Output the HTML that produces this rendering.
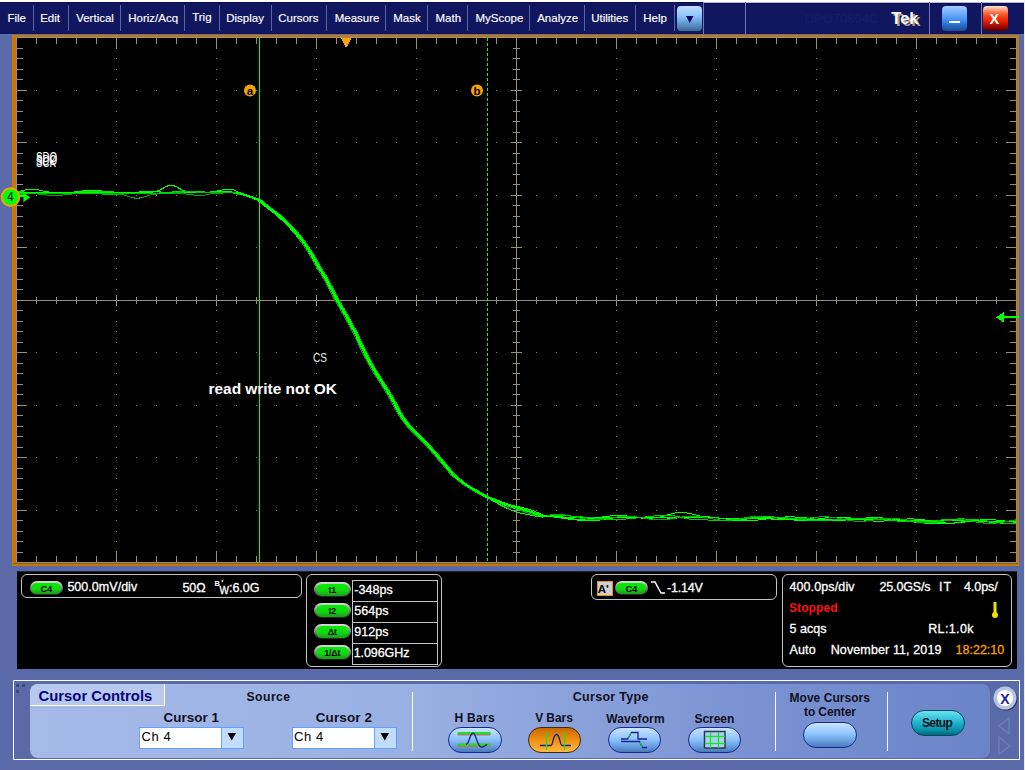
<!DOCTYPE html>
<html><head><meta charset="utf-8"><style>
*{margin:0;padding:0;box-sizing:border-box}
html,body{width:1025px;height:770px;overflow:hidden;background:#5a6aa8;font-family:"Liberation Sans", sans-serif;position:relative}
.a{position:absolute;white-space:pre}
.mi{position:absolute;top:10px;font-size:11.5px;color:#fff;line-height:14px}
.sep{position:absolute;top:5px;width:1px;height:26px;background:#6e78b0}
.w{color:#fff}
</style></head><body>
<div class="a" style="left:0;top:0;width:1025px;height:2px;background:#fff"></div>
<div class="a" style="left:0;top:2px;width:1025px;height:32px;background:#11175e"></div>
<div class="a" style="left:0;top:33px;width:1025px;height:1px;background:#0b0f55"></div>
<div class="a" style="left:0;top:2px;width:703px;height:1px;background:#0a0c58"></div>
<div class="a" style="left:704px;top:2px;width:321px;height:1px;background:#b8b8d8"></div>
<div class="a" style="left:704px;top:3px;width:321px;height:1px;background:#0a0c58"></div>
<div class="a" style="left:0;top:34px;width:1025px;height:1px;background:#6272b8"></div>
<svg class="a" style="left:0;top:0" width="1025" height="770" shape-rendering="crispEdges">
<rect x="12" y="35" width="1007" height="531" fill="#c87800"/>
<rect x="16" y="37" width="1001" height="526" fill="#000"/>
<rect x="16" y="37" width="1001" height="1" fill="#998f75"/>
<rect x="16" y="562" width="1001" height="1" fill="#998f75"/>
<rect x="13" y="563" width="1005" height="1" fill="#8e5c12"/>
<rect x="16" y="37" width="1" height="526" fill="#998f75"/>
<rect x="1016" y="37" width="1" height="526" fill="#998f75"/>
<rect x="116" y="48" width="1" height="1" fill="#8c846a"/>
<rect x="116" y="58" width="1" height="1" fill="#8c846a"/>
<rect x="116" y="69" width="1" height="1" fill="#8c846a"/>
<rect x="116" y="79" width="1" height="1" fill="#8c846a"/>
<rect x="116" y="90" width="1" height="1" fill="#8c846a"/>
<rect x="116" y="100" width="1" height="1" fill="#8c846a"/>
<rect x="116" y="111" width="1" height="1" fill="#8c846a"/>
<rect x="116" y="121" width="1" height="1" fill="#8c846a"/>
<rect x="116" y="132" width="1" height="1" fill="#8c846a"/>
<rect x="116" y="142" width="1" height="1" fill="#8c846a"/>
<rect x="116" y="153" width="1" height="1" fill="#8c846a"/>
<rect x="116" y="163" width="1" height="1" fill="#8c846a"/>
<rect x="116" y="174" width="1" height="1" fill="#8c846a"/>
<rect x="116" y="184" width="1" height="1" fill="#8c846a"/>
<rect x="116" y="195" width="1" height="1" fill="#8c846a"/>
<rect x="116" y="205" width="1" height="1" fill="#8c846a"/>
<rect x="116" y="216" width="1" height="1" fill="#8c846a"/>
<rect x="116" y="226" width="1" height="1" fill="#8c846a"/>
<rect x="116" y="237" width="1" height="1" fill="#8c846a"/>
<rect x="116" y="247" width="1" height="1" fill="#8c846a"/>
<rect x="116" y="258" width="1" height="1" fill="#8c846a"/>
<rect x="116" y="268" width="1" height="1" fill="#8c846a"/>
<rect x="116" y="279" width="1" height="1" fill="#8c846a"/>
<rect x="116" y="289" width="1" height="1" fill="#8c846a"/>
<rect x="116" y="300" width="1" height="1" fill="#8c846a"/>
<rect x="116" y="310" width="1" height="1" fill="#8c846a"/>
<rect x="116" y="321" width="1" height="1" fill="#8c846a"/>
<rect x="116" y="331" width="1" height="1" fill="#8c846a"/>
<rect x="116" y="342" width="1" height="1" fill="#8c846a"/>
<rect x="116" y="352" width="1" height="1" fill="#8c846a"/>
<rect x="116" y="363" width="1" height="1" fill="#8c846a"/>
<rect x="116" y="373" width="1" height="1" fill="#8c846a"/>
<rect x="116" y="384" width="1" height="1" fill="#8c846a"/>
<rect x="116" y="394" width="1" height="1" fill="#8c846a"/>
<rect x="116" y="405" width="1" height="1" fill="#8c846a"/>
<rect x="116" y="415" width="1" height="1" fill="#8c846a"/>
<rect x="116" y="426" width="1" height="1" fill="#8c846a"/>
<rect x="116" y="436" width="1" height="1" fill="#8c846a"/>
<rect x="116" y="447" width="1" height="1" fill="#8c846a"/>
<rect x="116" y="457" width="1" height="1" fill="#8c846a"/>
<rect x="116" y="468" width="1" height="1" fill="#8c846a"/>
<rect x="116" y="478" width="1" height="1" fill="#8c846a"/>
<rect x="116" y="489" width="1" height="1" fill="#8c846a"/>
<rect x="116" y="499" width="1" height="1" fill="#8c846a"/>
<rect x="116" y="510" width="1" height="1" fill="#8c846a"/>
<rect x="116" y="520" width="1" height="1" fill="#8c846a"/>
<rect x="116" y="531" width="1" height="1" fill="#8c846a"/>
<rect x="116" y="541" width="1" height="1" fill="#8c846a"/>
<rect x="116" y="552" width="1" height="1" fill="#8c846a"/>
<rect x="216" y="48" width="1" height="1" fill="#8c846a"/>
<rect x="216" y="58" width="1" height="1" fill="#8c846a"/>
<rect x="216" y="69" width="1" height="1" fill="#8c846a"/>
<rect x="216" y="79" width="1" height="1" fill="#8c846a"/>
<rect x="216" y="90" width="1" height="1" fill="#8c846a"/>
<rect x="216" y="100" width="1" height="1" fill="#8c846a"/>
<rect x="216" y="111" width="1" height="1" fill="#8c846a"/>
<rect x="216" y="121" width="1" height="1" fill="#8c846a"/>
<rect x="216" y="132" width="1" height="1" fill="#8c846a"/>
<rect x="216" y="142" width="1" height="1" fill="#8c846a"/>
<rect x="216" y="153" width="1" height="1" fill="#8c846a"/>
<rect x="216" y="163" width="1" height="1" fill="#8c846a"/>
<rect x="216" y="174" width="1" height="1" fill="#8c846a"/>
<rect x="216" y="184" width="1" height="1" fill="#8c846a"/>
<rect x="216" y="195" width="1" height="1" fill="#8c846a"/>
<rect x="216" y="205" width="1" height="1" fill="#8c846a"/>
<rect x="216" y="216" width="1" height="1" fill="#8c846a"/>
<rect x="216" y="226" width="1" height="1" fill="#8c846a"/>
<rect x="216" y="237" width="1" height="1" fill="#8c846a"/>
<rect x="216" y="247" width="1" height="1" fill="#8c846a"/>
<rect x="216" y="258" width="1" height="1" fill="#8c846a"/>
<rect x="216" y="268" width="1" height="1" fill="#8c846a"/>
<rect x="216" y="279" width="1" height="1" fill="#8c846a"/>
<rect x="216" y="289" width="1" height="1" fill="#8c846a"/>
<rect x="216" y="300" width="1" height="1" fill="#8c846a"/>
<rect x="216" y="310" width="1" height="1" fill="#8c846a"/>
<rect x="216" y="321" width="1" height="1" fill="#8c846a"/>
<rect x="216" y="331" width="1" height="1" fill="#8c846a"/>
<rect x="216" y="342" width="1" height="1" fill="#8c846a"/>
<rect x="216" y="352" width="1" height="1" fill="#8c846a"/>
<rect x="216" y="363" width="1" height="1" fill="#8c846a"/>
<rect x="216" y="373" width="1" height="1" fill="#8c846a"/>
<rect x="216" y="384" width="1" height="1" fill="#8c846a"/>
<rect x="216" y="394" width="1" height="1" fill="#8c846a"/>
<rect x="216" y="405" width="1" height="1" fill="#8c846a"/>
<rect x="216" y="415" width="1" height="1" fill="#8c846a"/>
<rect x="216" y="426" width="1" height="1" fill="#8c846a"/>
<rect x="216" y="436" width="1" height="1" fill="#8c846a"/>
<rect x="216" y="447" width="1" height="1" fill="#8c846a"/>
<rect x="216" y="457" width="1" height="1" fill="#8c846a"/>
<rect x="216" y="468" width="1" height="1" fill="#8c846a"/>
<rect x="216" y="478" width="1" height="1" fill="#8c846a"/>
<rect x="216" y="489" width="1" height="1" fill="#8c846a"/>
<rect x="216" y="499" width="1" height="1" fill="#8c846a"/>
<rect x="216" y="510" width="1" height="1" fill="#8c846a"/>
<rect x="216" y="520" width="1" height="1" fill="#8c846a"/>
<rect x="216" y="531" width="1" height="1" fill="#8c846a"/>
<rect x="216" y="541" width="1" height="1" fill="#8c846a"/>
<rect x="216" y="552" width="1" height="1" fill="#8c846a"/>
<rect x="316" y="48" width="1" height="1" fill="#8c846a"/>
<rect x="316" y="58" width="1" height="1" fill="#8c846a"/>
<rect x="316" y="69" width="1" height="1" fill="#8c846a"/>
<rect x="316" y="79" width="1" height="1" fill="#8c846a"/>
<rect x="316" y="90" width="1" height="1" fill="#8c846a"/>
<rect x="316" y="100" width="1" height="1" fill="#8c846a"/>
<rect x="316" y="111" width="1" height="1" fill="#8c846a"/>
<rect x="316" y="121" width="1" height="1" fill="#8c846a"/>
<rect x="316" y="132" width="1" height="1" fill="#8c846a"/>
<rect x="316" y="142" width="1" height="1" fill="#8c846a"/>
<rect x="316" y="153" width="1" height="1" fill="#8c846a"/>
<rect x="316" y="163" width="1" height="1" fill="#8c846a"/>
<rect x="316" y="174" width="1" height="1" fill="#8c846a"/>
<rect x="316" y="184" width="1" height="1" fill="#8c846a"/>
<rect x="316" y="195" width="1" height="1" fill="#8c846a"/>
<rect x="316" y="205" width="1" height="1" fill="#8c846a"/>
<rect x="316" y="216" width="1" height="1" fill="#8c846a"/>
<rect x="316" y="226" width="1" height="1" fill="#8c846a"/>
<rect x="316" y="237" width="1" height="1" fill="#8c846a"/>
<rect x="316" y="247" width="1" height="1" fill="#8c846a"/>
<rect x="316" y="258" width="1" height="1" fill="#8c846a"/>
<rect x="316" y="268" width="1" height="1" fill="#8c846a"/>
<rect x="316" y="279" width="1" height="1" fill="#8c846a"/>
<rect x="316" y="289" width="1" height="1" fill="#8c846a"/>
<rect x="316" y="300" width="1" height="1" fill="#8c846a"/>
<rect x="316" y="310" width="1" height="1" fill="#8c846a"/>
<rect x="316" y="321" width="1" height="1" fill="#8c846a"/>
<rect x="316" y="331" width="1" height="1" fill="#8c846a"/>
<rect x="316" y="342" width="1" height="1" fill="#8c846a"/>
<rect x="316" y="352" width="1" height="1" fill="#8c846a"/>
<rect x="316" y="363" width="1" height="1" fill="#8c846a"/>
<rect x="316" y="373" width="1" height="1" fill="#8c846a"/>
<rect x="316" y="384" width="1" height="1" fill="#8c846a"/>
<rect x="316" y="394" width="1" height="1" fill="#8c846a"/>
<rect x="316" y="405" width="1" height="1" fill="#8c846a"/>
<rect x="316" y="415" width="1" height="1" fill="#8c846a"/>
<rect x="316" y="426" width="1" height="1" fill="#8c846a"/>
<rect x="316" y="436" width="1" height="1" fill="#8c846a"/>
<rect x="316" y="447" width="1" height="1" fill="#8c846a"/>
<rect x="316" y="457" width="1" height="1" fill="#8c846a"/>
<rect x="316" y="468" width="1" height="1" fill="#8c846a"/>
<rect x="316" y="478" width="1" height="1" fill="#8c846a"/>
<rect x="316" y="489" width="1" height="1" fill="#8c846a"/>
<rect x="316" y="499" width="1" height="1" fill="#8c846a"/>
<rect x="316" y="510" width="1" height="1" fill="#8c846a"/>
<rect x="316" y="520" width="1" height="1" fill="#8c846a"/>
<rect x="316" y="531" width="1" height="1" fill="#8c846a"/>
<rect x="316" y="541" width="1" height="1" fill="#8c846a"/>
<rect x="316" y="552" width="1" height="1" fill="#8c846a"/>
<rect x="416" y="48" width="1" height="1" fill="#8c846a"/>
<rect x="416" y="58" width="1" height="1" fill="#8c846a"/>
<rect x="416" y="69" width="1" height="1" fill="#8c846a"/>
<rect x="416" y="79" width="1" height="1" fill="#8c846a"/>
<rect x="416" y="90" width="1" height="1" fill="#8c846a"/>
<rect x="416" y="100" width="1" height="1" fill="#8c846a"/>
<rect x="416" y="111" width="1" height="1" fill="#8c846a"/>
<rect x="416" y="121" width="1" height="1" fill="#8c846a"/>
<rect x="416" y="132" width="1" height="1" fill="#8c846a"/>
<rect x="416" y="142" width="1" height="1" fill="#8c846a"/>
<rect x="416" y="153" width="1" height="1" fill="#8c846a"/>
<rect x="416" y="163" width="1" height="1" fill="#8c846a"/>
<rect x="416" y="174" width="1" height="1" fill="#8c846a"/>
<rect x="416" y="184" width="1" height="1" fill="#8c846a"/>
<rect x="416" y="195" width="1" height="1" fill="#8c846a"/>
<rect x="416" y="205" width="1" height="1" fill="#8c846a"/>
<rect x="416" y="216" width="1" height="1" fill="#8c846a"/>
<rect x="416" y="226" width="1" height="1" fill="#8c846a"/>
<rect x="416" y="237" width="1" height="1" fill="#8c846a"/>
<rect x="416" y="247" width="1" height="1" fill="#8c846a"/>
<rect x="416" y="258" width="1" height="1" fill="#8c846a"/>
<rect x="416" y="268" width="1" height="1" fill="#8c846a"/>
<rect x="416" y="279" width="1" height="1" fill="#8c846a"/>
<rect x="416" y="289" width="1" height="1" fill="#8c846a"/>
<rect x="416" y="300" width="1" height="1" fill="#8c846a"/>
<rect x="416" y="310" width="1" height="1" fill="#8c846a"/>
<rect x="416" y="321" width="1" height="1" fill="#8c846a"/>
<rect x="416" y="331" width="1" height="1" fill="#8c846a"/>
<rect x="416" y="342" width="1" height="1" fill="#8c846a"/>
<rect x="416" y="352" width="1" height="1" fill="#8c846a"/>
<rect x="416" y="363" width="1" height="1" fill="#8c846a"/>
<rect x="416" y="373" width="1" height="1" fill="#8c846a"/>
<rect x="416" y="384" width="1" height="1" fill="#8c846a"/>
<rect x="416" y="394" width="1" height="1" fill="#8c846a"/>
<rect x="416" y="405" width="1" height="1" fill="#8c846a"/>
<rect x="416" y="415" width="1" height="1" fill="#8c846a"/>
<rect x="416" y="426" width="1" height="1" fill="#8c846a"/>
<rect x="416" y="436" width="1" height="1" fill="#8c846a"/>
<rect x="416" y="447" width="1" height="1" fill="#8c846a"/>
<rect x="416" y="457" width="1" height="1" fill="#8c846a"/>
<rect x="416" y="468" width="1" height="1" fill="#8c846a"/>
<rect x="416" y="478" width="1" height="1" fill="#8c846a"/>
<rect x="416" y="489" width="1" height="1" fill="#8c846a"/>
<rect x="416" y="499" width="1" height="1" fill="#8c846a"/>
<rect x="416" y="510" width="1" height="1" fill="#8c846a"/>
<rect x="416" y="520" width="1" height="1" fill="#8c846a"/>
<rect x="416" y="531" width="1" height="1" fill="#8c846a"/>
<rect x="416" y="541" width="1" height="1" fill="#8c846a"/>
<rect x="416" y="552" width="1" height="1" fill="#8c846a"/>
<rect x="616" y="48" width="1" height="1" fill="#8c846a"/>
<rect x="616" y="58" width="1" height="1" fill="#8c846a"/>
<rect x="616" y="69" width="1" height="1" fill="#8c846a"/>
<rect x="616" y="79" width="1" height="1" fill="#8c846a"/>
<rect x="616" y="90" width="1" height="1" fill="#8c846a"/>
<rect x="616" y="100" width="1" height="1" fill="#8c846a"/>
<rect x="616" y="111" width="1" height="1" fill="#8c846a"/>
<rect x="616" y="121" width="1" height="1" fill="#8c846a"/>
<rect x="616" y="132" width="1" height="1" fill="#8c846a"/>
<rect x="616" y="142" width="1" height="1" fill="#8c846a"/>
<rect x="616" y="153" width="1" height="1" fill="#8c846a"/>
<rect x="616" y="163" width="1" height="1" fill="#8c846a"/>
<rect x="616" y="174" width="1" height="1" fill="#8c846a"/>
<rect x="616" y="184" width="1" height="1" fill="#8c846a"/>
<rect x="616" y="195" width="1" height="1" fill="#8c846a"/>
<rect x="616" y="205" width="1" height="1" fill="#8c846a"/>
<rect x="616" y="216" width="1" height="1" fill="#8c846a"/>
<rect x="616" y="226" width="1" height="1" fill="#8c846a"/>
<rect x="616" y="237" width="1" height="1" fill="#8c846a"/>
<rect x="616" y="247" width="1" height="1" fill="#8c846a"/>
<rect x="616" y="258" width="1" height="1" fill="#8c846a"/>
<rect x="616" y="268" width="1" height="1" fill="#8c846a"/>
<rect x="616" y="279" width="1" height="1" fill="#8c846a"/>
<rect x="616" y="289" width="1" height="1" fill="#8c846a"/>
<rect x="616" y="300" width="1" height="1" fill="#8c846a"/>
<rect x="616" y="310" width="1" height="1" fill="#8c846a"/>
<rect x="616" y="321" width="1" height="1" fill="#8c846a"/>
<rect x="616" y="331" width="1" height="1" fill="#8c846a"/>
<rect x="616" y="342" width="1" height="1" fill="#8c846a"/>
<rect x="616" y="352" width="1" height="1" fill="#8c846a"/>
<rect x="616" y="363" width="1" height="1" fill="#8c846a"/>
<rect x="616" y="373" width="1" height="1" fill="#8c846a"/>
<rect x="616" y="384" width="1" height="1" fill="#8c846a"/>
<rect x="616" y="394" width="1" height="1" fill="#8c846a"/>
<rect x="616" y="405" width="1" height="1" fill="#8c846a"/>
<rect x="616" y="415" width="1" height="1" fill="#8c846a"/>
<rect x="616" y="426" width="1" height="1" fill="#8c846a"/>
<rect x="616" y="436" width="1" height="1" fill="#8c846a"/>
<rect x="616" y="447" width="1" height="1" fill="#8c846a"/>
<rect x="616" y="457" width="1" height="1" fill="#8c846a"/>
<rect x="616" y="468" width="1" height="1" fill="#8c846a"/>
<rect x="616" y="478" width="1" height="1" fill="#8c846a"/>
<rect x="616" y="489" width="1" height="1" fill="#8c846a"/>
<rect x="616" y="499" width="1" height="1" fill="#8c846a"/>
<rect x="616" y="510" width="1" height="1" fill="#8c846a"/>
<rect x="616" y="520" width="1" height="1" fill="#8c846a"/>
<rect x="616" y="531" width="1" height="1" fill="#8c846a"/>
<rect x="616" y="541" width="1" height="1" fill="#8c846a"/>
<rect x="616" y="552" width="1" height="1" fill="#8c846a"/>
<rect x="716" y="48" width="1" height="1" fill="#8c846a"/>
<rect x="716" y="58" width="1" height="1" fill="#8c846a"/>
<rect x="716" y="69" width="1" height="1" fill="#8c846a"/>
<rect x="716" y="79" width="1" height="1" fill="#8c846a"/>
<rect x="716" y="90" width="1" height="1" fill="#8c846a"/>
<rect x="716" y="100" width="1" height="1" fill="#8c846a"/>
<rect x="716" y="111" width="1" height="1" fill="#8c846a"/>
<rect x="716" y="121" width="1" height="1" fill="#8c846a"/>
<rect x="716" y="132" width="1" height="1" fill="#8c846a"/>
<rect x="716" y="142" width="1" height="1" fill="#8c846a"/>
<rect x="716" y="153" width="1" height="1" fill="#8c846a"/>
<rect x="716" y="163" width="1" height="1" fill="#8c846a"/>
<rect x="716" y="174" width="1" height="1" fill="#8c846a"/>
<rect x="716" y="184" width="1" height="1" fill="#8c846a"/>
<rect x="716" y="195" width="1" height="1" fill="#8c846a"/>
<rect x="716" y="205" width="1" height="1" fill="#8c846a"/>
<rect x="716" y="216" width="1" height="1" fill="#8c846a"/>
<rect x="716" y="226" width="1" height="1" fill="#8c846a"/>
<rect x="716" y="237" width="1" height="1" fill="#8c846a"/>
<rect x="716" y="247" width="1" height="1" fill="#8c846a"/>
<rect x="716" y="258" width="1" height="1" fill="#8c846a"/>
<rect x="716" y="268" width="1" height="1" fill="#8c846a"/>
<rect x="716" y="279" width="1" height="1" fill="#8c846a"/>
<rect x="716" y="289" width="1" height="1" fill="#8c846a"/>
<rect x="716" y="300" width="1" height="1" fill="#8c846a"/>
<rect x="716" y="310" width="1" height="1" fill="#8c846a"/>
<rect x="716" y="321" width="1" height="1" fill="#8c846a"/>
<rect x="716" y="331" width="1" height="1" fill="#8c846a"/>
<rect x="716" y="342" width="1" height="1" fill="#8c846a"/>
<rect x="716" y="352" width="1" height="1" fill="#8c846a"/>
<rect x="716" y="363" width="1" height="1" fill="#8c846a"/>
<rect x="716" y="373" width="1" height="1" fill="#8c846a"/>
<rect x="716" y="384" width="1" height="1" fill="#8c846a"/>
<rect x="716" y="394" width="1" height="1" fill="#8c846a"/>
<rect x="716" y="405" width="1" height="1" fill="#8c846a"/>
<rect x="716" y="415" width="1" height="1" fill="#8c846a"/>
<rect x="716" y="426" width="1" height="1" fill="#8c846a"/>
<rect x="716" y="436" width="1" height="1" fill="#8c846a"/>
<rect x="716" y="447" width="1" height="1" fill="#8c846a"/>
<rect x="716" y="457" width="1" height="1" fill="#8c846a"/>
<rect x="716" y="468" width="1" height="1" fill="#8c846a"/>
<rect x="716" y="478" width="1" height="1" fill="#8c846a"/>
<rect x="716" y="489" width="1" height="1" fill="#8c846a"/>
<rect x="716" y="499" width="1" height="1" fill="#8c846a"/>
<rect x="716" y="510" width="1" height="1" fill="#8c846a"/>
<rect x="716" y="520" width="1" height="1" fill="#8c846a"/>
<rect x="716" y="531" width="1" height="1" fill="#8c846a"/>
<rect x="716" y="541" width="1" height="1" fill="#8c846a"/>
<rect x="716" y="552" width="1" height="1" fill="#8c846a"/>
<rect x="816" y="48" width="1" height="1" fill="#8c846a"/>
<rect x="816" y="58" width="1" height="1" fill="#8c846a"/>
<rect x="816" y="69" width="1" height="1" fill="#8c846a"/>
<rect x="816" y="79" width="1" height="1" fill="#8c846a"/>
<rect x="816" y="90" width="1" height="1" fill="#8c846a"/>
<rect x="816" y="100" width="1" height="1" fill="#8c846a"/>
<rect x="816" y="111" width="1" height="1" fill="#8c846a"/>
<rect x="816" y="121" width="1" height="1" fill="#8c846a"/>
<rect x="816" y="132" width="1" height="1" fill="#8c846a"/>
<rect x="816" y="142" width="1" height="1" fill="#8c846a"/>
<rect x="816" y="153" width="1" height="1" fill="#8c846a"/>
<rect x="816" y="163" width="1" height="1" fill="#8c846a"/>
<rect x="816" y="174" width="1" height="1" fill="#8c846a"/>
<rect x="816" y="184" width="1" height="1" fill="#8c846a"/>
<rect x="816" y="195" width="1" height="1" fill="#8c846a"/>
<rect x="816" y="205" width="1" height="1" fill="#8c846a"/>
<rect x="816" y="216" width="1" height="1" fill="#8c846a"/>
<rect x="816" y="226" width="1" height="1" fill="#8c846a"/>
<rect x="816" y="237" width="1" height="1" fill="#8c846a"/>
<rect x="816" y="247" width="1" height="1" fill="#8c846a"/>
<rect x="816" y="258" width="1" height="1" fill="#8c846a"/>
<rect x="816" y="268" width="1" height="1" fill="#8c846a"/>
<rect x="816" y="279" width="1" height="1" fill="#8c846a"/>
<rect x="816" y="289" width="1" height="1" fill="#8c846a"/>
<rect x="816" y="300" width="1" height="1" fill="#8c846a"/>
<rect x="816" y="310" width="1" height="1" fill="#8c846a"/>
<rect x="816" y="321" width="1" height="1" fill="#8c846a"/>
<rect x="816" y="331" width="1" height="1" fill="#8c846a"/>
<rect x="816" y="342" width="1" height="1" fill="#8c846a"/>
<rect x="816" y="352" width="1" height="1" fill="#8c846a"/>
<rect x="816" y="363" width="1" height="1" fill="#8c846a"/>
<rect x="816" y="373" width="1" height="1" fill="#8c846a"/>
<rect x="816" y="384" width="1" height="1" fill="#8c846a"/>
<rect x="816" y="394" width="1" height="1" fill="#8c846a"/>
<rect x="816" y="405" width="1" height="1" fill="#8c846a"/>
<rect x="816" y="415" width="1" height="1" fill="#8c846a"/>
<rect x="816" y="426" width="1" height="1" fill="#8c846a"/>
<rect x="816" y="436" width="1" height="1" fill="#8c846a"/>
<rect x="816" y="447" width="1" height="1" fill="#8c846a"/>
<rect x="816" y="457" width="1" height="1" fill="#8c846a"/>
<rect x="816" y="468" width="1" height="1" fill="#8c846a"/>
<rect x="816" y="478" width="1" height="1" fill="#8c846a"/>
<rect x="816" y="489" width="1" height="1" fill="#8c846a"/>
<rect x="816" y="499" width="1" height="1" fill="#8c846a"/>
<rect x="816" y="510" width="1" height="1" fill="#8c846a"/>
<rect x="816" y="520" width="1" height="1" fill="#8c846a"/>
<rect x="816" y="531" width="1" height="1" fill="#8c846a"/>
<rect x="816" y="541" width="1" height="1" fill="#8c846a"/>
<rect x="816" y="552" width="1" height="1" fill="#8c846a"/>
<rect x="916" y="48" width="1" height="1" fill="#8c846a"/>
<rect x="916" y="58" width="1" height="1" fill="#8c846a"/>
<rect x="916" y="69" width="1" height="1" fill="#8c846a"/>
<rect x="916" y="79" width="1" height="1" fill="#8c846a"/>
<rect x="916" y="90" width="1" height="1" fill="#8c846a"/>
<rect x="916" y="100" width="1" height="1" fill="#8c846a"/>
<rect x="916" y="111" width="1" height="1" fill="#8c846a"/>
<rect x="916" y="121" width="1" height="1" fill="#8c846a"/>
<rect x="916" y="132" width="1" height="1" fill="#8c846a"/>
<rect x="916" y="142" width="1" height="1" fill="#8c846a"/>
<rect x="916" y="153" width="1" height="1" fill="#8c846a"/>
<rect x="916" y="163" width="1" height="1" fill="#8c846a"/>
<rect x="916" y="174" width="1" height="1" fill="#8c846a"/>
<rect x="916" y="184" width="1" height="1" fill="#8c846a"/>
<rect x="916" y="195" width="1" height="1" fill="#8c846a"/>
<rect x="916" y="205" width="1" height="1" fill="#8c846a"/>
<rect x="916" y="216" width="1" height="1" fill="#8c846a"/>
<rect x="916" y="226" width="1" height="1" fill="#8c846a"/>
<rect x="916" y="237" width="1" height="1" fill="#8c846a"/>
<rect x="916" y="247" width="1" height="1" fill="#8c846a"/>
<rect x="916" y="258" width="1" height="1" fill="#8c846a"/>
<rect x="916" y="268" width="1" height="1" fill="#8c846a"/>
<rect x="916" y="279" width="1" height="1" fill="#8c846a"/>
<rect x="916" y="289" width="1" height="1" fill="#8c846a"/>
<rect x="916" y="300" width="1" height="1" fill="#8c846a"/>
<rect x="916" y="310" width="1" height="1" fill="#8c846a"/>
<rect x="916" y="321" width="1" height="1" fill="#8c846a"/>
<rect x="916" y="331" width="1" height="1" fill="#8c846a"/>
<rect x="916" y="342" width="1" height="1" fill="#8c846a"/>
<rect x="916" y="352" width="1" height="1" fill="#8c846a"/>
<rect x="916" y="363" width="1" height="1" fill="#8c846a"/>
<rect x="916" y="373" width="1" height="1" fill="#8c846a"/>
<rect x="916" y="384" width="1" height="1" fill="#8c846a"/>
<rect x="916" y="394" width="1" height="1" fill="#8c846a"/>
<rect x="916" y="405" width="1" height="1" fill="#8c846a"/>
<rect x="916" y="415" width="1" height="1" fill="#8c846a"/>
<rect x="916" y="426" width="1" height="1" fill="#8c846a"/>
<rect x="916" y="436" width="1" height="1" fill="#8c846a"/>
<rect x="916" y="447" width="1" height="1" fill="#8c846a"/>
<rect x="916" y="457" width="1" height="1" fill="#8c846a"/>
<rect x="916" y="468" width="1" height="1" fill="#8c846a"/>
<rect x="916" y="478" width="1" height="1" fill="#8c846a"/>
<rect x="916" y="489" width="1" height="1" fill="#8c846a"/>
<rect x="916" y="499" width="1" height="1" fill="#8c846a"/>
<rect x="916" y="510" width="1" height="1" fill="#8c846a"/>
<rect x="916" y="520" width="1" height="1" fill="#8c846a"/>
<rect x="916" y="531" width="1" height="1" fill="#8c846a"/>
<rect x="916" y="541" width="1" height="1" fill="#8c846a"/>
<rect x="916" y="552" width="1" height="1" fill="#8c846a"/>
<rect x="36" y="90" width="1" height="1" fill="#8c846a"/>
<rect x="56" y="90" width="1" height="1" fill="#8c846a"/>
<rect x="76" y="90" width="1" height="1" fill="#8c846a"/>
<rect x="96" y="90" width="1" height="1" fill="#8c846a"/>
<rect x="116" y="90" width="1" height="1" fill="#8c846a"/>
<rect x="136" y="90" width="1" height="1" fill="#8c846a"/>
<rect x="156" y="90" width="1" height="1" fill="#8c846a"/>
<rect x="176" y="90" width="1" height="1" fill="#8c846a"/>
<rect x="196" y="90" width="1" height="1" fill="#8c846a"/>
<rect x="216" y="90" width="1" height="1" fill="#8c846a"/>
<rect x="236" y="90" width="1" height="1" fill="#8c846a"/>
<rect x="256" y="90" width="1" height="1" fill="#8c846a"/>
<rect x="276" y="90" width="1" height="1" fill="#8c846a"/>
<rect x="296" y="90" width="1" height="1" fill="#8c846a"/>
<rect x="316" y="90" width="1" height="1" fill="#8c846a"/>
<rect x="336" y="90" width="1" height="1" fill="#8c846a"/>
<rect x="356" y="90" width="1" height="1" fill="#8c846a"/>
<rect x="376" y="90" width="1" height="1" fill="#8c846a"/>
<rect x="396" y="90" width="1" height="1" fill="#8c846a"/>
<rect x="416" y="90" width="1" height="1" fill="#8c846a"/>
<rect x="436" y="90" width="1" height="1" fill="#8c846a"/>
<rect x="456" y="90" width="1" height="1" fill="#8c846a"/>
<rect x="476" y="90" width="1" height="1" fill="#8c846a"/>
<rect x="496" y="90" width="1" height="1" fill="#8c846a"/>
<rect x="516" y="90" width="1" height="1" fill="#8c846a"/>
<rect x="536" y="90" width="1" height="1" fill="#8c846a"/>
<rect x="556" y="90" width="1" height="1" fill="#8c846a"/>
<rect x="576" y="90" width="1" height="1" fill="#8c846a"/>
<rect x="596" y="90" width="1" height="1" fill="#8c846a"/>
<rect x="616" y="90" width="1" height="1" fill="#8c846a"/>
<rect x="636" y="90" width="1" height="1" fill="#8c846a"/>
<rect x="656" y="90" width="1" height="1" fill="#8c846a"/>
<rect x="676" y="90" width="1" height="1" fill="#8c846a"/>
<rect x="696" y="90" width="1" height="1" fill="#8c846a"/>
<rect x="716" y="90" width="1" height="1" fill="#8c846a"/>
<rect x="736" y="90" width="1" height="1" fill="#8c846a"/>
<rect x="756" y="90" width="1" height="1" fill="#8c846a"/>
<rect x="776" y="90" width="1" height="1" fill="#8c846a"/>
<rect x="796" y="90" width="1" height="1" fill="#8c846a"/>
<rect x="816" y="90" width="1" height="1" fill="#8c846a"/>
<rect x="836" y="90" width="1" height="1" fill="#8c846a"/>
<rect x="856" y="90" width="1" height="1" fill="#8c846a"/>
<rect x="876" y="90" width="1" height="1" fill="#8c846a"/>
<rect x="896" y="90" width="1" height="1" fill="#8c846a"/>
<rect x="916" y="90" width="1" height="1" fill="#8c846a"/>
<rect x="936" y="90" width="1" height="1" fill="#8c846a"/>
<rect x="956" y="90" width="1" height="1" fill="#8c846a"/>
<rect x="976" y="90" width="1" height="1" fill="#8c846a"/>
<rect x="996" y="90" width="1" height="1" fill="#8c846a"/>
<rect x="36" y="142" width="1" height="1" fill="#8c846a"/>
<rect x="56" y="142" width="1" height="1" fill="#8c846a"/>
<rect x="76" y="142" width="1" height="1" fill="#8c846a"/>
<rect x="96" y="142" width="1" height="1" fill="#8c846a"/>
<rect x="116" y="142" width="1" height="1" fill="#8c846a"/>
<rect x="136" y="142" width="1" height="1" fill="#8c846a"/>
<rect x="156" y="142" width="1" height="1" fill="#8c846a"/>
<rect x="176" y="142" width="1" height="1" fill="#8c846a"/>
<rect x="196" y="142" width="1" height="1" fill="#8c846a"/>
<rect x="216" y="142" width="1" height="1" fill="#8c846a"/>
<rect x="236" y="142" width="1" height="1" fill="#8c846a"/>
<rect x="256" y="142" width="1" height="1" fill="#8c846a"/>
<rect x="276" y="142" width="1" height="1" fill="#8c846a"/>
<rect x="296" y="142" width="1" height="1" fill="#8c846a"/>
<rect x="316" y="142" width="1" height="1" fill="#8c846a"/>
<rect x="336" y="142" width="1" height="1" fill="#8c846a"/>
<rect x="356" y="142" width="1" height="1" fill="#8c846a"/>
<rect x="376" y="142" width="1" height="1" fill="#8c846a"/>
<rect x="396" y="142" width="1" height="1" fill="#8c846a"/>
<rect x="416" y="142" width="1" height="1" fill="#8c846a"/>
<rect x="436" y="142" width="1" height="1" fill="#8c846a"/>
<rect x="456" y="142" width="1" height="1" fill="#8c846a"/>
<rect x="476" y="142" width="1" height="1" fill="#8c846a"/>
<rect x="496" y="142" width="1" height="1" fill="#8c846a"/>
<rect x="516" y="142" width="1" height="1" fill="#8c846a"/>
<rect x="536" y="142" width="1" height="1" fill="#8c846a"/>
<rect x="556" y="142" width="1" height="1" fill="#8c846a"/>
<rect x="576" y="142" width="1" height="1" fill="#8c846a"/>
<rect x="596" y="142" width="1" height="1" fill="#8c846a"/>
<rect x="616" y="142" width="1" height="1" fill="#8c846a"/>
<rect x="636" y="142" width="1" height="1" fill="#8c846a"/>
<rect x="656" y="142" width="1" height="1" fill="#8c846a"/>
<rect x="676" y="142" width="1" height="1" fill="#8c846a"/>
<rect x="696" y="142" width="1" height="1" fill="#8c846a"/>
<rect x="716" y="142" width="1" height="1" fill="#8c846a"/>
<rect x="736" y="142" width="1" height="1" fill="#8c846a"/>
<rect x="756" y="142" width="1" height="1" fill="#8c846a"/>
<rect x="776" y="142" width="1" height="1" fill="#8c846a"/>
<rect x="796" y="142" width="1" height="1" fill="#8c846a"/>
<rect x="816" y="142" width="1" height="1" fill="#8c846a"/>
<rect x="836" y="142" width="1" height="1" fill="#8c846a"/>
<rect x="856" y="142" width="1" height="1" fill="#8c846a"/>
<rect x="876" y="142" width="1" height="1" fill="#8c846a"/>
<rect x="896" y="142" width="1" height="1" fill="#8c846a"/>
<rect x="916" y="142" width="1" height="1" fill="#8c846a"/>
<rect x="936" y="142" width="1" height="1" fill="#8c846a"/>
<rect x="956" y="142" width="1" height="1" fill="#8c846a"/>
<rect x="976" y="142" width="1" height="1" fill="#8c846a"/>
<rect x="996" y="142" width="1" height="1" fill="#8c846a"/>
<rect x="36" y="195" width="1" height="1" fill="#8c846a"/>
<rect x="56" y="195" width="1" height="1" fill="#8c846a"/>
<rect x="76" y="195" width="1" height="1" fill="#8c846a"/>
<rect x="96" y="195" width="1" height="1" fill="#8c846a"/>
<rect x="116" y="195" width="1" height="1" fill="#8c846a"/>
<rect x="136" y="195" width="1" height="1" fill="#8c846a"/>
<rect x="156" y="195" width="1" height="1" fill="#8c846a"/>
<rect x="176" y="195" width="1" height="1" fill="#8c846a"/>
<rect x="196" y="195" width="1" height="1" fill="#8c846a"/>
<rect x="216" y="195" width="1" height="1" fill="#8c846a"/>
<rect x="236" y="195" width="1" height="1" fill="#8c846a"/>
<rect x="256" y="195" width="1" height="1" fill="#8c846a"/>
<rect x="276" y="195" width="1" height="1" fill="#8c846a"/>
<rect x="296" y="195" width="1" height="1" fill="#8c846a"/>
<rect x="316" y="195" width="1" height="1" fill="#8c846a"/>
<rect x="336" y="195" width="1" height="1" fill="#8c846a"/>
<rect x="356" y="195" width="1" height="1" fill="#8c846a"/>
<rect x="376" y="195" width="1" height="1" fill="#8c846a"/>
<rect x="396" y="195" width="1" height="1" fill="#8c846a"/>
<rect x="416" y="195" width="1" height="1" fill="#8c846a"/>
<rect x="436" y="195" width="1" height="1" fill="#8c846a"/>
<rect x="456" y="195" width="1" height="1" fill="#8c846a"/>
<rect x="476" y="195" width="1" height="1" fill="#8c846a"/>
<rect x="496" y="195" width="1" height="1" fill="#8c846a"/>
<rect x="516" y="195" width="1" height="1" fill="#8c846a"/>
<rect x="536" y="195" width="1" height="1" fill="#8c846a"/>
<rect x="556" y="195" width="1" height="1" fill="#8c846a"/>
<rect x="576" y="195" width="1" height="1" fill="#8c846a"/>
<rect x="596" y="195" width="1" height="1" fill="#8c846a"/>
<rect x="616" y="195" width="1" height="1" fill="#8c846a"/>
<rect x="636" y="195" width="1" height="1" fill="#8c846a"/>
<rect x="656" y="195" width="1" height="1" fill="#8c846a"/>
<rect x="676" y="195" width="1" height="1" fill="#8c846a"/>
<rect x="696" y="195" width="1" height="1" fill="#8c846a"/>
<rect x="716" y="195" width="1" height="1" fill="#8c846a"/>
<rect x="736" y="195" width="1" height="1" fill="#8c846a"/>
<rect x="756" y="195" width="1" height="1" fill="#8c846a"/>
<rect x="776" y="195" width="1" height="1" fill="#8c846a"/>
<rect x="796" y="195" width="1" height="1" fill="#8c846a"/>
<rect x="816" y="195" width="1" height="1" fill="#8c846a"/>
<rect x="836" y="195" width="1" height="1" fill="#8c846a"/>
<rect x="856" y="195" width="1" height="1" fill="#8c846a"/>
<rect x="876" y="195" width="1" height="1" fill="#8c846a"/>
<rect x="896" y="195" width="1" height="1" fill="#8c846a"/>
<rect x="916" y="195" width="1" height="1" fill="#8c846a"/>
<rect x="936" y="195" width="1" height="1" fill="#8c846a"/>
<rect x="956" y="195" width="1" height="1" fill="#8c846a"/>
<rect x="976" y="195" width="1" height="1" fill="#8c846a"/>
<rect x="996" y="195" width="1" height="1" fill="#8c846a"/>
<rect x="36" y="247" width="1" height="1" fill="#8c846a"/>
<rect x="56" y="247" width="1" height="1" fill="#8c846a"/>
<rect x="76" y="247" width="1" height="1" fill="#8c846a"/>
<rect x="96" y="247" width="1" height="1" fill="#8c846a"/>
<rect x="116" y="247" width="1" height="1" fill="#8c846a"/>
<rect x="136" y="247" width="1" height="1" fill="#8c846a"/>
<rect x="156" y="247" width="1" height="1" fill="#8c846a"/>
<rect x="176" y="247" width="1" height="1" fill="#8c846a"/>
<rect x="196" y="247" width="1" height="1" fill="#8c846a"/>
<rect x="216" y="247" width="1" height="1" fill="#8c846a"/>
<rect x="236" y="247" width="1" height="1" fill="#8c846a"/>
<rect x="256" y="247" width="1" height="1" fill="#8c846a"/>
<rect x="276" y="247" width="1" height="1" fill="#8c846a"/>
<rect x="296" y="247" width="1" height="1" fill="#8c846a"/>
<rect x="316" y="247" width="1" height="1" fill="#8c846a"/>
<rect x="336" y="247" width="1" height="1" fill="#8c846a"/>
<rect x="356" y="247" width="1" height="1" fill="#8c846a"/>
<rect x="376" y="247" width="1" height="1" fill="#8c846a"/>
<rect x="396" y="247" width="1" height="1" fill="#8c846a"/>
<rect x="416" y="247" width="1" height="1" fill="#8c846a"/>
<rect x="436" y="247" width="1" height="1" fill="#8c846a"/>
<rect x="456" y="247" width="1" height="1" fill="#8c846a"/>
<rect x="476" y="247" width="1" height="1" fill="#8c846a"/>
<rect x="496" y="247" width="1" height="1" fill="#8c846a"/>
<rect x="516" y="247" width="1" height="1" fill="#8c846a"/>
<rect x="536" y="247" width="1" height="1" fill="#8c846a"/>
<rect x="556" y="247" width="1" height="1" fill="#8c846a"/>
<rect x="576" y="247" width="1" height="1" fill="#8c846a"/>
<rect x="596" y="247" width="1" height="1" fill="#8c846a"/>
<rect x="616" y="247" width="1" height="1" fill="#8c846a"/>
<rect x="636" y="247" width="1" height="1" fill="#8c846a"/>
<rect x="656" y="247" width="1" height="1" fill="#8c846a"/>
<rect x="676" y="247" width="1" height="1" fill="#8c846a"/>
<rect x="696" y="247" width="1" height="1" fill="#8c846a"/>
<rect x="716" y="247" width="1" height="1" fill="#8c846a"/>
<rect x="736" y="247" width="1" height="1" fill="#8c846a"/>
<rect x="756" y="247" width="1" height="1" fill="#8c846a"/>
<rect x="776" y="247" width="1" height="1" fill="#8c846a"/>
<rect x="796" y="247" width="1" height="1" fill="#8c846a"/>
<rect x="816" y="247" width="1" height="1" fill="#8c846a"/>
<rect x="836" y="247" width="1" height="1" fill="#8c846a"/>
<rect x="856" y="247" width="1" height="1" fill="#8c846a"/>
<rect x="876" y="247" width="1" height="1" fill="#8c846a"/>
<rect x="896" y="247" width="1" height="1" fill="#8c846a"/>
<rect x="916" y="247" width="1" height="1" fill="#8c846a"/>
<rect x="936" y="247" width="1" height="1" fill="#8c846a"/>
<rect x="956" y="247" width="1" height="1" fill="#8c846a"/>
<rect x="976" y="247" width="1" height="1" fill="#8c846a"/>
<rect x="996" y="247" width="1" height="1" fill="#8c846a"/>
<rect x="36" y="352" width="1" height="1" fill="#8c846a"/>
<rect x="56" y="352" width="1" height="1" fill="#8c846a"/>
<rect x="76" y="352" width="1" height="1" fill="#8c846a"/>
<rect x="96" y="352" width="1" height="1" fill="#8c846a"/>
<rect x="116" y="352" width="1" height="1" fill="#8c846a"/>
<rect x="136" y="352" width="1" height="1" fill="#8c846a"/>
<rect x="156" y="352" width="1" height="1" fill="#8c846a"/>
<rect x="176" y="352" width="1" height="1" fill="#8c846a"/>
<rect x="196" y="352" width="1" height="1" fill="#8c846a"/>
<rect x="216" y="352" width="1" height="1" fill="#8c846a"/>
<rect x="236" y="352" width="1" height="1" fill="#8c846a"/>
<rect x="256" y="352" width="1" height="1" fill="#8c846a"/>
<rect x="276" y="352" width="1" height="1" fill="#8c846a"/>
<rect x="296" y="352" width="1" height="1" fill="#8c846a"/>
<rect x="316" y="352" width="1" height="1" fill="#8c846a"/>
<rect x="336" y="352" width="1" height="1" fill="#8c846a"/>
<rect x="356" y="352" width="1" height="1" fill="#8c846a"/>
<rect x="376" y="352" width="1" height="1" fill="#8c846a"/>
<rect x="396" y="352" width="1" height="1" fill="#8c846a"/>
<rect x="416" y="352" width="1" height="1" fill="#8c846a"/>
<rect x="436" y="352" width="1" height="1" fill="#8c846a"/>
<rect x="456" y="352" width="1" height="1" fill="#8c846a"/>
<rect x="476" y="352" width="1" height="1" fill="#8c846a"/>
<rect x="496" y="352" width="1" height="1" fill="#8c846a"/>
<rect x="516" y="352" width="1" height="1" fill="#8c846a"/>
<rect x="536" y="352" width="1" height="1" fill="#8c846a"/>
<rect x="556" y="352" width="1" height="1" fill="#8c846a"/>
<rect x="576" y="352" width="1" height="1" fill="#8c846a"/>
<rect x="596" y="352" width="1" height="1" fill="#8c846a"/>
<rect x="616" y="352" width="1" height="1" fill="#8c846a"/>
<rect x="636" y="352" width="1" height="1" fill="#8c846a"/>
<rect x="656" y="352" width="1" height="1" fill="#8c846a"/>
<rect x="676" y="352" width="1" height="1" fill="#8c846a"/>
<rect x="696" y="352" width="1" height="1" fill="#8c846a"/>
<rect x="716" y="352" width="1" height="1" fill="#8c846a"/>
<rect x="736" y="352" width="1" height="1" fill="#8c846a"/>
<rect x="756" y="352" width="1" height="1" fill="#8c846a"/>
<rect x="776" y="352" width="1" height="1" fill="#8c846a"/>
<rect x="796" y="352" width="1" height="1" fill="#8c846a"/>
<rect x="816" y="352" width="1" height="1" fill="#8c846a"/>
<rect x="836" y="352" width="1" height="1" fill="#8c846a"/>
<rect x="856" y="352" width="1" height="1" fill="#8c846a"/>
<rect x="876" y="352" width="1" height="1" fill="#8c846a"/>
<rect x="896" y="352" width="1" height="1" fill="#8c846a"/>
<rect x="916" y="352" width="1" height="1" fill="#8c846a"/>
<rect x="936" y="352" width="1" height="1" fill="#8c846a"/>
<rect x="956" y="352" width="1" height="1" fill="#8c846a"/>
<rect x="976" y="352" width="1" height="1" fill="#8c846a"/>
<rect x="996" y="352" width="1" height="1" fill="#8c846a"/>
<rect x="36" y="405" width="1" height="1" fill="#8c846a"/>
<rect x="56" y="405" width="1" height="1" fill="#8c846a"/>
<rect x="76" y="405" width="1" height="1" fill="#8c846a"/>
<rect x="96" y="405" width="1" height="1" fill="#8c846a"/>
<rect x="116" y="405" width="1" height="1" fill="#8c846a"/>
<rect x="136" y="405" width="1" height="1" fill="#8c846a"/>
<rect x="156" y="405" width="1" height="1" fill="#8c846a"/>
<rect x="176" y="405" width="1" height="1" fill="#8c846a"/>
<rect x="196" y="405" width="1" height="1" fill="#8c846a"/>
<rect x="216" y="405" width="1" height="1" fill="#8c846a"/>
<rect x="236" y="405" width="1" height="1" fill="#8c846a"/>
<rect x="256" y="405" width="1" height="1" fill="#8c846a"/>
<rect x="276" y="405" width="1" height="1" fill="#8c846a"/>
<rect x="296" y="405" width="1" height="1" fill="#8c846a"/>
<rect x="316" y="405" width="1" height="1" fill="#8c846a"/>
<rect x="336" y="405" width="1" height="1" fill="#8c846a"/>
<rect x="356" y="405" width="1" height="1" fill="#8c846a"/>
<rect x="376" y="405" width="1" height="1" fill="#8c846a"/>
<rect x="396" y="405" width="1" height="1" fill="#8c846a"/>
<rect x="416" y="405" width="1" height="1" fill="#8c846a"/>
<rect x="436" y="405" width="1" height="1" fill="#8c846a"/>
<rect x="456" y="405" width="1" height="1" fill="#8c846a"/>
<rect x="476" y="405" width="1" height="1" fill="#8c846a"/>
<rect x="496" y="405" width="1" height="1" fill="#8c846a"/>
<rect x="516" y="405" width="1" height="1" fill="#8c846a"/>
<rect x="536" y="405" width="1" height="1" fill="#8c846a"/>
<rect x="556" y="405" width="1" height="1" fill="#8c846a"/>
<rect x="576" y="405" width="1" height="1" fill="#8c846a"/>
<rect x="596" y="405" width="1" height="1" fill="#8c846a"/>
<rect x="616" y="405" width="1" height="1" fill="#8c846a"/>
<rect x="636" y="405" width="1" height="1" fill="#8c846a"/>
<rect x="656" y="405" width="1" height="1" fill="#8c846a"/>
<rect x="676" y="405" width="1" height="1" fill="#8c846a"/>
<rect x="696" y="405" width="1" height="1" fill="#8c846a"/>
<rect x="716" y="405" width="1" height="1" fill="#8c846a"/>
<rect x="736" y="405" width="1" height="1" fill="#8c846a"/>
<rect x="756" y="405" width="1" height="1" fill="#8c846a"/>
<rect x="776" y="405" width="1" height="1" fill="#8c846a"/>
<rect x="796" y="405" width="1" height="1" fill="#8c846a"/>
<rect x="816" y="405" width="1" height="1" fill="#8c846a"/>
<rect x="836" y="405" width="1" height="1" fill="#8c846a"/>
<rect x="856" y="405" width="1" height="1" fill="#8c846a"/>
<rect x="876" y="405" width="1" height="1" fill="#8c846a"/>
<rect x="896" y="405" width="1" height="1" fill="#8c846a"/>
<rect x="916" y="405" width="1" height="1" fill="#8c846a"/>
<rect x="936" y="405" width="1" height="1" fill="#8c846a"/>
<rect x="956" y="405" width="1" height="1" fill="#8c846a"/>
<rect x="976" y="405" width="1" height="1" fill="#8c846a"/>
<rect x="996" y="405" width="1" height="1" fill="#8c846a"/>
<rect x="36" y="457" width="1" height="1" fill="#8c846a"/>
<rect x="56" y="457" width="1" height="1" fill="#8c846a"/>
<rect x="76" y="457" width="1" height="1" fill="#8c846a"/>
<rect x="96" y="457" width="1" height="1" fill="#8c846a"/>
<rect x="116" y="457" width="1" height="1" fill="#8c846a"/>
<rect x="136" y="457" width="1" height="1" fill="#8c846a"/>
<rect x="156" y="457" width="1" height="1" fill="#8c846a"/>
<rect x="176" y="457" width="1" height="1" fill="#8c846a"/>
<rect x="196" y="457" width="1" height="1" fill="#8c846a"/>
<rect x="216" y="457" width="1" height="1" fill="#8c846a"/>
<rect x="236" y="457" width="1" height="1" fill="#8c846a"/>
<rect x="256" y="457" width="1" height="1" fill="#8c846a"/>
<rect x="276" y="457" width="1" height="1" fill="#8c846a"/>
<rect x="296" y="457" width="1" height="1" fill="#8c846a"/>
<rect x="316" y="457" width="1" height="1" fill="#8c846a"/>
<rect x="336" y="457" width="1" height="1" fill="#8c846a"/>
<rect x="356" y="457" width="1" height="1" fill="#8c846a"/>
<rect x="376" y="457" width="1" height="1" fill="#8c846a"/>
<rect x="396" y="457" width="1" height="1" fill="#8c846a"/>
<rect x="416" y="457" width="1" height="1" fill="#8c846a"/>
<rect x="436" y="457" width="1" height="1" fill="#8c846a"/>
<rect x="456" y="457" width="1" height="1" fill="#8c846a"/>
<rect x="476" y="457" width="1" height="1" fill="#8c846a"/>
<rect x="496" y="457" width="1" height="1" fill="#8c846a"/>
<rect x="516" y="457" width="1" height="1" fill="#8c846a"/>
<rect x="536" y="457" width="1" height="1" fill="#8c846a"/>
<rect x="556" y="457" width="1" height="1" fill="#8c846a"/>
<rect x="576" y="457" width="1" height="1" fill="#8c846a"/>
<rect x="596" y="457" width="1" height="1" fill="#8c846a"/>
<rect x="616" y="457" width="1" height="1" fill="#8c846a"/>
<rect x="636" y="457" width="1" height="1" fill="#8c846a"/>
<rect x="656" y="457" width="1" height="1" fill="#8c846a"/>
<rect x="676" y="457" width="1" height="1" fill="#8c846a"/>
<rect x="696" y="457" width="1" height="1" fill="#8c846a"/>
<rect x="716" y="457" width="1" height="1" fill="#8c846a"/>
<rect x="736" y="457" width="1" height="1" fill="#8c846a"/>
<rect x="756" y="457" width="1" height="1" fill="#8c846a"/>
<rect x="776" y="457" width="1" height="1" fill="#8c846a"/>
<rect x="796" y="457" width="1" height="1" fill="#8c846a"/>
<rect x="816" y="457" width="1" height="1" fill="#8c846a"/>
<rect x="836" y="457" width="1" height="1" fill="#8c846a"/>
<rect x="856" y="457" width="1" height="1" fill="#8c846a"/>
<rect x="876" y="457" width="1" height="1" fill="#8c846a"/>
<rect x="896" y="457" width="1" height="1" fill="#8c846a"/>
<rect x="916" y="457" width="1" height="1" fill="#8c846a"/>
<rect x="936" y="457" width="1" height="1" fill="#8c846a"/>
<rect x="956" y="457" width="1" height="1" fill="#8c846a"/>
<rect x="976" y="457" width="1" height="1" fill="#8c846a"/>
<rect x="996" y="457" width="1" height="1" fill="#8c846a"/>
<rect x="36" y="510" width="1" height="1" fill="#8c846a"/>
<rect x="56" y="510" width="1" height="1" fill="#8c846a"/>
<rect x="76" y="510" width="1" height="1" fill="#8c846a"/>
<rect x="96" y="510" width="1" height="1" fill="#8c846a"/>
<rect x="116" y="510" width="1" height="1" fill="#8c846a"/>
<rect x="136" y="510" width="1" height="1" fill="#8c846a"/>
<rect x="156" y="510" width="1" height="1" fill="#8c846a"/>
<rect x="176" y="510" width="1" height="1" fill="#8c846a"/>
<rect x="196" y="510" width="1" height="1" fill="#8c846a"/>
<rect x="216" y="510" width="1" height="1" fill="#8c846a"/>
<rect x="236" y="510" width="1" height="1" fill="#8c846a"/>
<rect x="256" y="510" width="1" height="1" fill="#8c846a"/>
<rect x="276" y="510" width="1" height="1" fill="#8c846a"/>
<rect x="296" y="510" width="1" height="1" fill="#8c846a"/>
<rect x="316" y="510" width="1" height="1" fill="#8c846a"/>
<rect x="336" y="510" width="1" height="1" fill="#8c846a"/>
<rect x="356" y="510" width="1" height="1" fill="#8c846a"/>
<rect x="376" y="510" width="1" height="1" fill="#8c846a"/>
<rect x="396" y="510" width="1" height="1" fill="#8c846a"/>
<rect x="416" y="510" width="1" height="1" fill="#8c846a"/>
<rect x="436" y="510" width="1" height="1" fill="#8c846a"/>
<rect x="456" y="510" width="1" height="1" fill="#8c846a"/>
<rect x="476" y="510" width="1" height="1" fill="#8c846a"/>
<rect x="496" y="510" width="1" height="1" fill="#8c846a"/>
<rect x="516" y="510" width="1" height="1" fill="#8c846a"/>
<rect x="536" y="510" width="1" height="1" fill="#8c846a"/>
<rect x="556" y="510" width="1" height="1" fill="#8c846a"/>
<rect x="576" y="510" width="1" height="1" fill="#8c846a"/>
<rect x="596" y="510" width="1" height="1" fill="#8c846a"/>
<rect x="616" y="510" width="1" height="1" fill="#8c846a"/>
<rect x="636" y="510" width="1" height="1" fill="#8c846a"/>
<rect x="656" y="510" width="1" height="1" fill="#8c846a"/>
<rect x="676" y="510" width="1" height="1" fill="#8c846a"/>
<rect x="696" y="510" width="1" height="1" fill="#8c846a"/>
<rect x="716" y="510" width="1" height="1" fill="#8c846a"/>
<rect x="736" y="510" width="1" height="1" fill="#8c846a"/>
<rect x="756" y="510" width="1" height="1" fill="#8c846a"/>
<rect x="776" y="510" width="1" height="1" fill="#8c846a"/>
<rect x="796" y="510" width="1" height="1" fill="#8c846a"/>
<rect x="816" y="510" width="1" height="1" fill="#8c846a"/>
<rect x="836" y="510" width="1" height="1" fill="#8c846a"/>
<rect x="856" y="510" width="1" height="1" fill="#8c846a"/>
<rect x="876" y="510" width="1" height="1" fill="#8c846a"/>
<rect x="896" y="510" width="1" height="1" fill="#8c846a"/>
<rect x="916" y="510" width="1" height="1" fill="#8c846a"/>
<rect x="936" y="510" width="1" height="1" fill="#8c846a"/>
<rect x="956" y="510" width="1" height="1" fill="#8c846a"/>
<rect x="976" y="510" width="1" height="1" fill="#8c846a"/>
<rect x="996" y="510" width="1" height="1" fill="#8c846a"/>
<rect x="36" y="38" width="1" height="6" fill="#998f75"/>
<rect x="36" y="556" width="1" height="6" fill="#998f75"/>
<rect x="56" y="38" width="1" height="6" fill="#998f75"/>
<rect x="56" y="556" width="1" height="6" fill="#998f75"/>
<rect x="76" y="38" width="1" height="6" fill="#998f75"/>
<rect x="76" y="556" width="1" height="6" fill="#998f75"/>
<rect x="96" y="38" width="1" height="6" fill="#998f75"/>
<rect x="96" y="556" width="1" height="6" fill="#998f75"/>
<rect x="116" y="38" width="1" height="11" fill="#998f75"/>
<rect x="116" y="551" width="1" height="11" fill="#998f75"/>
<rect x="136" y="38" width="1" height="6" fill="#998f75"/>
<rect x="136" y="556" width="1" height="6" fill="#998f75"/>
<rect x="156" y="38" width="1" height="6" fill="#998f75"/>
<rect x="156" y="556" width="1" height="6" fill="#998f75"/>
<rect x="176" y="38" width="1" height="6" fill="#998f75"/>
<rect x="176" y="556" width="1" height="6" fill="#998f75"/>
<rect x="196" y="38" width="1" height="6" fill="#998f75"/>
<rect x="196" y="556" width="1" height="6" fill="#998f75"/>
<rect x="216" y="38" width="1" height="11" fill="#998f75"/>
<rect x="216" y="551" width="1" height="11" fill="#998f75"/>
<rect x="236" y="38" width="1" height="6" fill="#998f75"/>
<rect x="236" y="556" width="1" height="6" fill="#998f75"/>
<rect x="256" y="38" width="1" height="6" fill="#998f75"/>
<rect x="256" y="556" width="1" height="6" fill="#998f75"/>
<rect x="276" y="38" width="1" height="6" fill="#998f75"/>
<rect x="276" y="556" width="1" height="6" fill="#998f75"/>
<rect x="296" y="38" width="1" height="6" fill="#998f75"/>
<rect x="296" y="556" width="1" height="6" fill="#998f75"/>
<rect x="316" y="38" width="1" height="11" fill="#998f75"/>
<rect x="316" y="551" width="1" height="11" fill="#998f75"/>
<rect x="336" y="38" width="1" height="6" fill="#998f75"/>
<rect x="336" y="556" width="1" height="6" fill="#998f75"/>
<rect x="356" y="38" width="1" height="6" fill="#998f75"/>
<rect x="356" y="556" width="1" height="6" fill="#998f75"/>
<rect x="376" y="38" width="1" height="6" fill="#998f75"/>
<rect x="376" y="556" width="1" height="6" fill="#998f75"/>
<rect x="396" y="38" width="1" height="6" fill="#998f75"/>
<rect x="396" y="556" width="1" height="6" fill="#998f75"/>
<rect x="416" y="38" width="1" height="11" fill="#998f75"/>
<rect x="416" y="551" width="1" height="11" fill="#998f75"/>
<rect x="436" y="38" width="1" height="6" fill="#998f75"/>
<rect x="436" y="556" width="1" height="6" fill="#998f75"/>
<rect x="456" y="38" width="1" height="6" fill="#998f75"/>
<rect x="456" y="556" width="1" height="6" fill="#998f75"/>
<rect x="476" y="38" width="1" height="6" fill="#998f75"/>
<rect x="476" y="556" width="1" height="6" fill="#998f75"/>
<rect x="496" y="38" width="1" height="6" fill="#998f75"/>
<rect x="496" y="556" width="1" height="6" fill="#998f75"/>
<rect x="516" y="38" width="1" height="11" fill="#998f75"/>
<rect x="516" y="551" width="1" height="11" fill="#998f75"/>
<rect x="536" y="38" width="1" height="6" fill="#998f75"/>
<rect x="536" y="556" width="1" height="6" fill="#998f75"/>
<rect x="556" y="38" width="1" height="6" fill="#998f75"/>
<rect x="556" y="556" width="1" height="6" fill="#998f75"/>
<rect x="576" y="38" width="1" height="6" fill="#998f75"/>
<rect x="576" y="556" width="1" height="6" fill="#998f75"/>
<rect x="596" y="38" width="1" height="6" fill="#998f75"/>
<rect x="596" y="556" width="1" height="6" fill="#998f75"/>
<rect x="616" y="38" width="1" height="11" fill="#998f75"/>
<rect x="616" y="551" width="1" height="11" fill="#998f75"/>
<rect x="636" y="38" width="1" height="6" fill="#998f75"/>
<rect x="636" y="556" width="1" height="6" fill="#998f75"/>
<rect x="656" y="38" width="1" height="6" fill="#998f75"/>
<rect x="656" y="556" width="1" height="6" fill="#998f75"/>
<rect x="676" y="38" width="1" height="6" fill="#998f75"/>
<rect x="676" y="556" width="1" height="6" fill="#998f75"/>
<rect x="696" y="38" width="1" height="6" fill="#998f75"/>
<rect x="696" y="556" width="1" height="6" fill="#998f75"/>
<rect x="716" y="38" width="1" height="11" fill="#998f75"/>
<rect x="716" y="551" width="1" height="11" fill="#998f75"/>
<rect x="736" y="38" width="1" height="6" fill="#998f75"/>
<rect x="736" y="556" width="1" height="6" fill="#998f75"/>
<rect x="756" y="38" width="1" height="6" fill="#998f75"/>
<rect x="756" y="556" width="1" height="6" fill="#998f75"/>
<rect x="776" y="38" width="1" height="6" fill="#998f75"/>
<rect x="776" y="556" width="1" height="6" fill="#998f75"/>
<rect x="796" y="38" width="1" height="6" fill="#998f75"/>
<rect x="796" y="556" width="1" height="6" fill="#998f75"/>
<rect x="816" y="38" width="1" height="11" fill="#998f75"/>
<rect x="816" y="551" width="1" height="11" fill="#998f75"/>
<rect x="836" y="38" width="1" height="6" fill="#998f75"/>
<rect x="836" y="556" width="1" height="6" fill="#998f75"/>
<rect x="856" y="38" width="1" height="6" fill="#998f75"/>
<rect x="856" y="556" width="1" height="6" fill="#998f75"/>
<rect x="876" y="38" width="1" height="6" fill="#998f75"/>
<rect x="876" y="556" width="1" height="6" fill="#998f75"/>
<rect x="896" y="38" width="1" height="6" fill="#998f75"/>
<rect x="896" y="556" width="1" height="6" fill="#998f75"/>
<rect x="916" y="38" width="1" height="11" fill="#998f75"/>
<rect x="916" y="551" width="1" height="11" fill="#998f75"/>
<rect x="936" y="38" width="1" height="6" fill="#998f75"/>
<rect x="936" y="556" width="1" height="6" fill="#998f75"/>
<rect x="956" y="38" width="1" height="6" fill="#998f75"/>
<rect x="956" y="556" width="1" height="6" fill="#998f75"/>
<rect x="976" y="38" width="1" height="6" fill="#998f75"/>
<rect x="976" y="556" width="1" height="6" fill="#998f75"/>
<rect x="996" y="38" width="1" height="6" fill="#998f75"/>
<rect x="996" y="556" width="1" height="6" fill="#998f75"/>
<rect x="17" y="48" width="6" height="1" fill="#998f75"/>
<rect x="1010" y="48" width="6" height="1" fill="#998f75"/>
<rect x="17" y="58" width="6" height="1" fill="#998f75"/>
<rect x="1010" y="58" width="6" height="1" fill="#998f75"/>
<rect x="17" y="69" width="6" height="1" fill="#998f75"/>
<rect x="1010" y="69" width="6" height="1" fill="#998f75"/>
<rect x="17" y="79" width="6" height="1" fill="#998f75"/>
<rect x="1010" y="79" width="6" height="1" fill="#998f75"/>
<rect x="17" y="90" width="10" height="1" fill="#998f75"/>
<rect x="1006" y="90" width="10" height="1" fill="#998f75"/>
<rect x="17" y="100" width="6" height="1" fill="#998f75"/>
<rect x="1010" y="100" width="6" height="1" fill="#998f75"/>
<rect x="17" y="111" width="6" height="1" fill="#998f75"/>
<rect x="1010" y="111" width="6" height="1" fill="#998f75"/>
<rect x="17" y="121" width="6" height="1" fill="#998f75"/>
<rect x="1010" y="121" width="6" height="1" fill="#998f75"/>
<rect x="17" y="132" width="6" height="1" fill="#998f75"/>
<rect x="1010" y="132" width="6" height="1" fill="#998f75"/>
<rect x="17" y="142" width="10" height="1" fill="#998f75"/>
<rect x="1006" y="142" width="10" height="1" fill="#998f75"/>
<rect x="17" y="153" width="6" height="1" fill="#998f75"/>
<rect x="1010" y="153" width="6" height="1" fill="#998f75"/>
<rect x="17" y="163" width="6" height="1" fill="#998f75"/>
<rect x="1010" y="163" width="6" height="1" fill="#998f75"/>
<rect x="17" y="174" width="6" height="1" fill="#998f75"/>
<rect x="1010" y="174" width="6" height="1" fill="#998f75"/>
<rect x="17" y="184" width="6" height="1" fill="#998f75"/>
<rect x="1010" y="184" width="6" height="1" fill="#998f75"/>
<rect x="17" y="195" width="10" height="1" fill="#998f75"/>
<rect x="1006" y="195" width="10" height="1" fill="#998f75"/>
<rect x="17" y="205" width="6" height="1" fill="#998f75"/>
<rect x="1010" y="205" width="6" height="1" fill="#998f75"/>
<rect x="17" y="216" width="6" height="1" fill="#998f75"/>
<rect x="1010" y="216" width="6" height="1" fill="#998f75"/>
<rect x="17" y="226" width="6" height="1" fill="#998f75"/>
<rect x="1010" y="226" width="6" height="1" fill="#998f75"/>
<rect x="17" y="237" width="6" height="1" fill="#998f75"/>
<rect x="1010" y="237" width="6" height="1" fill="#998f75"/>
<rect x="17" y="247" width="10" height="1" fill="#998f75"/>
<rect x="1006" y="247" width="10" height="1" fill="#998f75"/>
<rect x="17" y="258" width="6" height="1" fill="#998f75"/>
<rect x="1010" y="258" width="6" height="1" fill="#998f75"/>
<rect x="17" y="268" width="6" height="1" fill="#998f75"/>
<rect x="1010" y="268" width="6" height="1" fill="#998f75"/>
<rect x="17" y="279" width="6" height="1" fill="#998f75"/>
<rect x="1010" y="279" width="6" height="1" fill="#998f75"/>
<rect x="17" y="289" width="6" height="1" fill="#998f75"/>
<rect x="1010" y="289" width="6" height="1" fill="#998f75"/>
<rect x="17" y="300" width="10" height="1" fill="#998f75"/>
<rect x="1006" y="300" width="10" height="1" fill="#998f75"/>
<rect x="17" y="310" width="6" height="1" fill="#998f75"/>
<rect x="1010" y="310" width="6" height="1" fill="#998f75"/>
<rect x="17" y="321" width="6" height="1" fill="#998f75"/>
<rect x="1010" y="321" width="6" height="1" fill="#998f75"/>
<rect x="17" y="331" width="6" height="1" fill="#998f75"/>
<rect x="1010" y="331" width="6" height="1" fill="#998f75"/>
<rect x="17" y="342" width="6" height="1" fill="#998f75"/>
<rect x="1010" y="342" width="6" height="1" fill="#998f75"/>
<rect x="17" y="352" width="10" height="1" fill="#998f75"/>
<rect x="1006" y="352" width="10" height="1" fill="#998f75"/>
<rect x="17" y="363" width="6" height="1" fill="#998f75"/>
<rect x="1010" y="363" width="6" height="1" fill="#998f75"/>
<rect x="17" y="373" width="6" height="1" fill="#998f75"/>
<rect x="1010" y="373" width="6" height="1" fill="#998f75"/>
<rect x="17" y="384" width="6" height="1" fill="#998f75"/>
<rect x="1010" y="384" width="6" height="1" fill="#998f75"/>
<rect x="17" y="394" width="6" height="1" fill="#998f75"/>
<rect x="1010" y="394" width="6" height="1" fill="#998f75"/>
<rect x="17" y="405" width="10" height="1" fill="#998f75"/>
<rect x="1006" y="405" width="10" height="1" fill="#998f75"/>
<rect x="17" y="415" width="6" height="1" fill="#998f75"/>
<rect x="1010" y="415" width="6" height="1" fill="#998f75"/>
<rect x="17" y="426" width="6" height="1" fill="#998f75"/>
<rect x="1010" y="426" width="6" height="1" fill="#998f75"/>
<rect x="17" y="436" width="6" height="1" fill="#998f75"/>
<rect x="1010" y="436" width="6" height="1" fill="#998f75"/>
<rect x="17" y="447" width="6" height="1" fill="#998f75"/>
<rect x="1010" y="447" width="6" height="1" fill="#998f75"/>
<rect x="17" y="457" width="10" height="1" fill="#998f75"/>
<rect x="1006" y="457" width="10" height="1" fill="#998f75"/>
<rect x="17" y="468" width="6" height="1" fill="#998f75"/>
<rect x="1010" y="468" width="6" height="1" fill="#998f75"/>
<rect x="17" y="478" width="6" height="1" fill="#998f75"/>
<rect x="1010" y="478" width="6" height="1" fill="#998f75"/>
<rect x="17" y="489" width="6" height="1" fill="#998f75"/>
<rect x="1010" y="489" width="6" height="1" fill="#998f75"/>
<rect x="17" y="499" width="6" height="1" fill="#998f75"/>
<rect x="1010" y="499" width="6" height="1" fill="#998f75"/>
<rect x="17" y="510" width="10" height="1" fill="#998f75"/>
<rect x="1006" y="510" width="10" height="1" fill="#998f75"/>
<rect x="17" y="520" width="6" height="1" fill="#998f75"/>
<rect x="1010" y="520" width="6" height="1" fill="#998f75"/>
<rect x="17" y="531" width="6" height="1" fill="#998f75"/>
<rect x="1010" y="531" width="6" height="1" fill="#998f75"/>
<rect x="17" y="541" width="6" height="1" fill="#998f75"/>
<rect x="1010" y="541" width="6" height="1" fill="#998f75"/>
<rect x="17" y="552" width="6" height="1" fill="#998f75"/>
<rect x="1010" y="552" width="6" height="1" fill="#998f75"/>
<rect x="516" y="38" width="1" height="524" fill="#998f75"/>
<rect x="17" y="300" width="999" height="1" fill="#998f75"/>
<rect x="36" y="297" width="1" height="7" fill="#998f75"/>
<rect x="56" y="297" width="1" height="7" fill="#998f75"/>
<rect x="76" y="297" width="1" height="7" fill="#998f75"/>
<rect x="96" y="297" width="1" height="7" fill="#998f75"/>
<rect x="116" y="295" width="1" height="11" fill="#998f75"/>
<rect x="136" y="297" width="1" height="7" fill="#998f75"/>
<rect x="156" y="297" width="1" height="7" fill="#998f75"/>
<rect x="176" y="297" width="1" height="7" fill="#998f75"/>
<rect x="196" y="297" width="1" height="7" fill="#998f75"/>
<rect x="216" y="295" width="1" height="11" fill="#998f75"/>
<rect x="236" y="297" width="1" height="7" fill="#998f75"/>
<rect x="256" y="297" width="1" height="7" fill="#998f75"/>
<rect x="276" y="297" width="1" height="7" fill="#998f75"/>
<rect x="296" y="297" width="1" height="7" fill="#998f75"/>
<rect x="316" y="295" width="1" height="11" fill="#998f75"/>
<rect x="336" y="297" width="1" height="7" fill="#998f75"/>
<rect x="356" y="297" width="1" height="7" fill="#998f75"/>
<rect x="376" y="297" width="1" height="7" fill="#998f75"/>
<rect x="396" y="297" width="1" height="7" fill="#998f75"/>
<rect x="416" y="295" width="1" height="11" fill="#998f75"/>
<rect x="436" y="297" width="1" height="7" fill="#998f75"/>
<rect x="456" y="297" width="1" height="7" fill="#998f75"/>
<rect x="476" y="297" width="1" height="7" fill="#998f75"/>
<rect x="496" y="297" width="1" height="7" fill="#998f75"/>
<rect x="516" y="295" width="1" height="11" fill="#998f75"/>
<rect x="536" y="297" width="1" height="7" fill="#998f75"/>
<rect x="556" y="297" width="1" height="7" fill="#998f75"/>
<rect x="576" y="297" width="1" height="7" fill="#998f75"/>
<rect x="596" y="297" width="1" height="7" fill="#998f75"/>
<rect x="616" y="295" width="1" height="11" fill="#998f75"/>
<rect x="636" y="297" width="1" height="7" fill="#998f75"/>
<rect x="656" y="297" width="1" height="7" fill="#998f75"/>
<rect x="676" y="297" width="1" height="7" fill="#998f75"/>
<rect x="696" y="297" width="1" height="7" fill="#998f75"/>
<rect x="716" y="295" width="1" height="11" fill="#998f75"/>
<rect x="736" y="297" width="1" height="7" fill="#998f75"/>
<rect x="756" y="297" width="1" height="7" fill="#998f75"/>
<rect x="776" y="297" width="1" height="7" fill="#998f75"/>
<rect x="796" y="297" width="1" height="7" fill="#998f75"/>
<rect x="816" y="295" width="1" height="11" fill="#998f75"/>
<rect x="836" y="297" width="1" height="7" fill="#998f75"/>
<rect x="856" y="297" width="1" height="7" fill="#998f75"/>
<rect x="876" y="297" width="1" height="7" fill="#998f75"/>
<rect x="896" y="297" width="1" height="7" fill="#998f75"/>
<rect x="916" y="295" width="1" height="11" fill="#998f75"/>
<rect x="936" y="297" width="1" height="7" fill="#998f75"/>
<rect x="956" y="297" width="1" height="7" fill="#998f75"/>
<rect x="976" y="297" width="1" height="7" fill="#998f75"/>
<rect x="996" y="297" width="1" height="7" fill="#998f75"/>
<rect x="513" y="48" width="7" height="1" fill="#998f75"/>
<rect x="513" y="58" width="7" height="1" fill="#998f75"/>
<rect x="513" y="69" width="7" height="1" fill="#998f75"/>
<rect x="513" y="79" width="7" height="1" fill="#998f75"/>
<rect x="511" y="90" width="11" height="1" fill="#998f75"/>
<rect x="513" y="100" width="7" height="1" fill="#998f75"/>
<rect x="513" y="111" width="7" height="1" fill="#998f75"/>
<rect x="513" y="121" width="7" height="1" fill="#998f75"/>
<rect x="513" y="132" width="7" height="1" fill="#998f75"/>
<rect x="511" y="142" width="11" height="1" fill="#998f75"/>
<rect x="513" y="153" width="7" height="1" fill="#998f75"/>
<rect x="513" y="163" width="7" height="1" fill="#998f75"/>
<rect x="513" y="174" width="7" height="1" fill="#998f75"/>
<rect x="513" y="184" width="7" height="1" fill="#998f75"/>
<rect x="511" y="195" width="11" height="1" fill="#998f75"/>
<rect x="513" y="205" width="7" height="1" fill="#998f75"/>
<rect x="513" y="216" width="7" height="1" fill="#998f75"/>
<rect x="513" y="226" width="7" height="1" fill="#998f75"/>
<rect x="513" y="237" width="7" height="1" fill="#998f75"/>
<rect x="511" y="247" width="11" height="1" fill="#998f75"/>
<rect x="513" y="258" width="7" height="1" fill="#998f75"/>
<rect x="513" y="268" width="7" height="1" fill="#998f75"/>
<rect x="513" y="279" width="7" height="1" fill="#998f75"/>
<rect x="513" y="289" width="7" height="1" fill="#998f75"/>
<rect x="511" y="300" width="11" height="1" fill="#998f75"/>
<rect x="513" y="310" width="7" height="1" fill="#998f75"/>
<rect x="513" y="321" width="7" height="1" fill="#998f75"/>
<rect x="513" y="331" width="7" height="1" fill="#998f75"/>
<rect x="513" y="342" width="7" height="1" fill="#998f75"/>
<rect x="511" y="352" width="11" height="1" fill="#998f75"/>
<rect x="513" y="363" width="7" height="1" fill="#998f75"/>
<rect x="513" y="373" width="7" height="1" fill="#998f75"/>
<rect x="513" y="384" width="7" height="1" fill="#998f75"/>
<rect x="513" y="394" width="7" height="1" fill="#998f75"/>
<rect x="511" y="405" width="11" height="1" fill="#998f75"/>
<rect x="513" y="415" width="7" height="1" fill="#998f75"/>
<rect x="513" y="426" width="7" height="1" fill="#998f75"/>
<rect x="513" y="436" width="7" height="1" fill="#998f75"/>
<rect x="513" y="447" width="7" height="1" fill="#998f75"/>
<rect x="511" y="457" width="11" height="1" fill="#998f75"/>
<rect x="513" y="468" width="7" height="1" fill="#998f75"/>
<rect x="513" y="478" width="7" height="1" fill="#998f75"/>
<rect x="513" y="489" width="7" height="1" fill="#998f75"/>
<rect x="513" y="499" width="7" height="1" fill="#998f75"/>
<rect x="511" y="510" width="11" height="1" fill="#998f75"/>
<rect x="513" y="520" width="7" height="1" fill="#998f75"/>
<rect x="513" y="531" width="7" height="1" fill="#998f75"/>
<rect x="513" y="541" width="7" height="1" fill="#998f75"/>
<rect x="513" y="552" width="7" height="1" fill="#998f75"/>
<rect x="259" y="38" width="1" height="524" fill="#00ff00"/>
<line x1="487.5" y1="38" x2="487.5" y2="562" stroke="#00ff00" stroke-width="1" stroke-dasharray="3 2"/>
<polyline points="17,191.8 18,191.6 19,191.4 20,191.2 21,191.0 22,190.8 23,190.5 24,190.3 25,190.0 26,189.8 27,189.6 28,189.4 29,189.2 30,189.1 31,189.0 32,189.0 33,189.0 34,189.1 35,189.2 36,189.4 37,189.6 38,189.8 39,190.0 40,190.3 41,190.5 42,190.8 43,191.0 44,191.2 45,191.4 46,191.6 47,191.8 48,191.9 49,192.0 50,192.1 51,192.2 52,192.3 53,192.3 54,192.4 55,192.4 56,192.4 57,192.4 58,192.5 59,192.5 60,192.5 61,192.5 62,192.5 63,192.5 64,192.5 65,192.4 66,192.4 67,192.4 68,192.4 69,192.3 70,192.3 71,192.2 72,192.2 73,192.1 74,192.0 75,191.9 76,191.8 77,191.7 78,191.6 79,191.4 80,191.3 81,191.2 82,191.0 83,190.8 84,190.7 85,190.6 86,190.4 87,190.3 88,190.2 89,190.1 90,190.1 91,190.0 92,190.0 93,190.0 94,190.1 95,190.1 96,190.2 97,190.3 98,190.4 99,190.6 100,190.7 101,190.8 102,191.0 103,191.2 104,191.3 105,191.4 106,191.6 107,191.7 108,191.8 109,191.9 110,192.0 111,192.1 112,192.2 113,192.2 114,192.3 115,192.3 116,192.4 117,192.4 118,192.4 119,192.4 120,192.5 121,192.5 122,192.5 123,192.5 124,192.5 125,192.5 126,192.5 127,192.5 128,192.5 129,192.5 130,192.5 131,192.5 132,192.4 133,192.4 134,192.4 135,192.3 136,192.3 137,192.2 138,192.1 139,192.1 140,191.9 141,191.8 142,191.7 143,191.6 144,191.5 145,191.3 146,191.2 147,191.1 148,191.1 149,191.0 150,191.0 151,191.0 152,191.1 153,191.1 154,191.2 155,191.3 156,191.5 157,191.6 158,191.7 159,191.8 160,191.9 161,192.1 162,192.1 163,192.2 164,192.3 165,192.3 166,192.4 167,192.4 168,192.4 169,192.5 170,192.5 171,192.5 172,192.5 173,192.5 174,192.5 175,192.5 176,192.5 177,192.5 178,192.5 179,192.5 180,192.5 181,192.5 182,192.5 183,192.5 184,192.5 185,192.5 186,192.5 187,192.5 188,192.5 189,192.5 190,192.5 191,192.5 192,192.5 193,192.5 194,192.5 195,192.5 196,192.5 197,192.5 198,192.5 199,192.5 200,192.5 201,192.5 202,192.4 203,192.4 204,192.4 205,192.3 206,192.3 207,192.2 208,192.2 209,192.1 210,192.0 211,191.9 212,191.8 213,191.7 214,191.6 215,191.4 216,191.2 217,191.0 218,190.8 219,190.6 220,190.4 221,190.2 222,190.0 223,189.7 224,189.6 225,189.4 226,189.3 227,189.2 228,189.1 229,189.1 230,189.1 231,189.2 232,189.3 233,189.7 234,190.1 235,190.5 236,190.9 237,191.4 238,191.9 239,192.3 240,192.7 241,193.1 242,193.4 243,193.7 244,194.2 245,194.6 246,195.0 247,195.4 248,195.8 249,196.2 250,196.6 251,196.9 252,197.3 253,197.7 254,198.0 255,198.4 256,198.8 257,199.1 258,199.5 259,199.9 260,200.4 261,201.3 262,202.1 263,202.9 264,203.8 265,204.6 266,205.4 267,206.2 268,207.1 269,207.9 270,208.6 271,209.4 272,210.1 273,210.8 274,211.6 275,212.3 276,213.0 277,213.8 278,214.5 279,215.3 280,216.2 281,217.2 282,218.1 283,219.1 284,220.0 285,221.0 286,221.9 287,222.9 288,223.8 289,224.8 290,225.9 291,227.0 292,228.1 293,229.1 294,230.2 295,231.3 296,232.6 297,233.8 298,235.1 299,236.3 300,237.6" fill="none" stroke="#00ff00" stroke-width="1" shape-rendering="crispEdges"/>
<polyline points="299,236.3 300,237.6 301,238.9 302,240.1 303,241.5 304,243.0 305,244.5 306,246.0 307,247.4 308,248.9 309,250.4 310,251.9 311,253.6 312,255.3 313,257.1 314,258.8 315,260.6 316,262.4 317,264.1 318,265.9 319,267.5 320,269.1 321,270.8 322,272.4 323,274.0 324,275.6 325,277.2 326,279.0 327,280.9 328,282.8 329,284.7 330,286.6 331,288.6 332,290.5 333,292.4 334,294.3 335,296.2 336,298.2 337,300.1 338,301.8 339,303.5 340,305.2 341,306.9 342,308.6 343,310.4 344,312.1 345,313.8 346,315.5 347,317.4 348,319.2 349,321.1 350,323.0 351,324.8 352,326.7 353,328.6 354,330.4 355,332.3 356,334.4 357,336.5 358,338.7 359,340.8 360,342.9 361,345.0 362,347.1 363,349.3 364,351.4 365,353.3 366,355.2 367,357.1 368,358.9 369,360.8 370,362.7 371,364.6 372,366.4 373,368.3 374,369.9 375,371.5 376,373.1 377,374.6 378,376.2 379,377.7 380,379.3 381,380.9 382,382.4 383,384.0 384,385.5 385,387.2 386,388.8 387,390.5 388,392.2 389,393.8 390,395.5 391,397.2 392,398.8 393,400.7 394,402.5 395,404.4 396,406.2 397,408.0 398,409.9 399,411.7 400,413.6 401,415.4 402,416.9 403,418.2 404,419.5 405,420.9 406,422.2 407,423.5 408,424.9 409,426.2 410,427.2 411,428.2 412,429.2 413,430.2 414,431.3 415,432.3 416,433.3 417,434.3 418,435.3 419,436.3 420,437.3 421,438.3 422,439.3 423,440.3 424,441.3 425,442.3 426,443.3 427,444.3 428,445.3 429,446.4 430,447.5 431,448.7 432,449.8 433,451.0 434,452.1 435,453.3 436,454.4 437,455.6 438,456.7 439,457.9 440,459.0 441,460.2 442,461.4 443,462.6 444,463.8 445,465.0 446,466.2 447,467.4 448,468.6 449,469.8 450,471.0 451,472.2 452,473.4 453,474.6 454,475.6 455,476.4 456,477.2 457,478.0 458,478.8 459,479.6 460,480.4 461,481.2 462,482.0 463,482.8 464,483.6 465,484.4 466,485.0 467,485.6 468,486.2 469,486.8 470,487.4 471,488.0 472,488.6 473,489.2 474,489.8 475,490.4 476,491.0 477,491.6 478,492.2 479,492.7 480,493.3 481,493.9 482,494.5 483,495.0 484,495.6 485,496.2 486,496.8 487,497.3 488,497.7 489,498.0 490,498.4 491,498.7 492,499.1 493,499.4 494,499.8 495,500.1 496,500.5 497,500.8 498,501.2 499,501.5 500,501.9 501,502.2 502,502.6 503,502.9 504,503.3 505,503.6 506,504.0 507,504.3 508,504.7 509,505.0 510,505.4 511,505.7 512,506.1 513,506.4 514,506.8 515,507.1 516,507.5 517,507.8 518,508.1 519,508.4 520,508.7 521,509.0 522,509.4 523,509.7 524,510.0 525,510.3 526,510.6 527,510.9 528,511.2 529,511.5 530,511.9 531,512.2 532,512.6 533,512.9 534,513.3 535,513.7 536,514.0 537,514.4 538,514.7 539,515.1 540,515.4 541,515.8 542,516.1 543,516.3 544,516.3 545,516.4 546,516.4 547,516.4 548,516.5 549,516.5 550,516.6 551,516.6 552,516.6 553,516.7 554,516.7 555,516.7 556,516.8 557,516.8 558,516.8 559,516.9 560,516.9 561,516.9 562,516.9 563,517.0 564,517.0 565,517.0 566,517.1 567,517.1 568,517.1 569,517.2 570,517.2 571,517.2 572,517.2 573,517.3 574,517.3 575,517.3 576,517.4 577,517.4 578,517.4 579,517.5 580,517.5 581,517.5 582,517.6 583,517.6 584,517.6 585,517.6 586,517.5 587,517.5 588,517.5 589,517.5 590,517.5 591,517.5 592,517.5 593,517.5 594,517.5 595,517.5 596,517.5 597,517.5 598,517.5 599,517.5 600,517.5 601,517.5 602,517.5 603,517.5 604,517.5 605,517.5 606,517.5 607,517.5 608,517.5 609,517.6 610,517.6 611,517.6 612,517.6 613,517.6 614,517.6 615,517.6 616,517.6 617,517.6 618,517.6 619,517.6 620,517.6 621,517.6 622,517.6 623,517.7 624,517.7 625,517.7 626,517.7 627,517.7 628,517.7 629,517.7 630,517.7 631,517.7 632,517.7 633,517.7 634,517.7 635,517.7 636,517.7 637,517.7 638,517.7 639,517.7 640,517.8 641,517.8 642,517.8 643,517.8 644,517.8 645,517.8 646,517.8 647,517.8 648,517.8 649,517.8 650,517.8 651,517.8 652,517.8 653,517.8 654,517.8 655,517.8 656,517.8 657,517.7 658,517.7 659,517.7 660,517.7 661,517.7 662,517.7 663,517.7 664,517.7 665,517.7 666,517.7 667,517.7 668,517.6 669,517.6 670,517.6 671,517.6 672,517.6 673,517.6 674,517.6 675,517.5 676,517.5 677,517.5 678,517.5 679,517.5 680,517.5 681,517.5 682,517.5 683,517.5 684,517.5 685,517.6 686,517.6 687,517.6 688,517.6 689,517.6 690,517.6 691,517.6 692,517.6 693,517.6 694,517.6 695,517.6 696,517.7 697,517.7 698,517.7 699,517.7 700,517.7 701,517.7 702,517.7 703,517.7 704,517.7 705,517.8 706,517.8 707,517.8 708,517.8 709,517.8 710,517.8 711,517.8 712,517.9 713,517.9 714,517.9 715,517.9 716,517.9 717,517.9 718,518.0 719,518.0 720,518.0 721,518.0 722,518.0 723,518.0 724,518.0 725,518.0 726,518.1 727,518.1 728,518.1 729,518.1 730,518.1 731,518.1 732,518.1 733,518.1 734,518.2 735,518.2 736,518.2 737,518.2 738,518.2 739,518.3 740,518.3 741,518.3 742,518.3 743,518.3 744,518.4 745,518.4 746,518.4 747,518.4 748,518.4 749,518.5 750,518.5 751,518.5 752,518.5 753,518.6 754,518.6 755,518.6 756,518.6 757,518.7 758,518.7 759,518.7 760,518.7 761,518.7 762,518.8 763,518.8 764,518.8 765,518.8 766,518.9 767,518.9 768,518.9 769,518.9 770,518.9 771,519.0 772,519.0 773,519.0 774,519.0 775,519.0 776,519.0 777,519.0 778,519.1 779,519.1 780,519.1 781,519.1 782,519.1 783,519.1 784,519.1 785,519.1 786,519.2 787,519.2 788,519.2 789,519.2 790,519.2 791,519.2 792,519.2 793,519.2 794,519.2 795,519.2 796,519.2 797,519.2 798,519.2 799,519.2 800,519.2 801,519.2 802,519.2 803,519.2 804,519.2 805,519.2 806,519.2 807,519.2 808,519.2 809,519.2 810,519.2 811,519.2 812,519.2 813,519.1 814,519.1 815,519.1 816,519.1 817,519.1 818,519.1 819,519.1 820,519.1 821,519.1 822,519.1 823,519.1 824,519.1 825,519.1 826,519.1 827,519.1 828,519.1 829,519.1 830,519.1 831,519.1 832,519.0 833,519.0 834,519.0 835,519.0 836,519.0 837,519.0 838,519.0 839,519.0 840,519.1 841,519.1 842,519.1 843,519.1 844,519.1 845,519.1 846,519.1 847,519.1 848,519.1 849,519.1 850,519.1 851,519.1 852,519.1 853,519.1 854,519.2 855,519.2 856,519.2 857,519.2 858,519.2 859,519.2 860,519.3 861,519.3 862,519.3 863,519.3 864,519.3 865,519.3 866,519.4 867,519.4 868,519.4 869,519.4 870,519.5 871,519.5 872,519.5 873,519.5 874,519.6 875,519.6 876,519.6 877,519.6 878,519.6 879,519.7 880,519.7 881,519.7 882,519.7 883,519.8 884,519.8 885,519.8 886,519.8 887,519.9 888,519.9 889,519.9 890,519.9 891,520.0 892,520.0 893,520.0 894,520.0 895,520.0 896,520.1 897,520.1 898,520.1 899,520.1 900,520.1 901,520.2 902,520.2 903,520.2 904,520.2 905,520.2 906,520.2 907,520.2 908,520.3 909,520.3 910,520.3 911,520.3 912,520.3 913,520.3 914,520.3 915,520.4 916,520.4 917,520.4 918,520.4 919,520.5 920,520.5 921,520.5 922,520.5 923,520.5 924,520.6 925,520.6 926,520.6 927,520.6 928,520.6 929,520.6 930,520.6 931,520.7 932,520.7 933,520.7 934,520.7 935,520.7 936,520.7 937,520.7 938,520.8 939,520.8 940,520.8 941,520.8 942,520.8 943,520.8 944,520.8 945,520.8 946,520.8 947,520.9 948,520.9 949,520.9 950,520.9 951,520.9 952,520.9 953,520.9 954,520.9 955,520.9 956,520.9 957,520.9 958,520.9 959,520.8 960,520.8 961,520.8 962,520.8 963,520.8 964,520.8 965,520.8 966,520.8 967,520.8 968,520.8 969,520.9 970,520.9 971,520.9 972,520.9 973,520.9 974,520.9 975,520.9 976,520.9 977,520.9 978,520.9 979,520.9 980,520.9 981,521.0 982,521.0 983,521.0 984,521.0 985,521.0 986,521.0 987,521.0 988,521.1 989,521.1 990,521.1 991,521.1 992,521.1 993,521.2 994,521.2 995,521.2 996,521.2 997,521.2 998,521.3 999,521.3 1000,521.3 1001,521.3 1002,521.3 1003,521.4 1004,521.4 1005,521.4 1006,521.4 1007,521.5 1008,521.5 1009,521.5 1010,521.5 1011,521.5 1012,521.6 1013,521.6 1014,521.6 1015,521.6 1016,521.7" fill="none" stroke="#00ff00" stroke-width="1" shape-rendering="crispEdges"/>
<polyline points="17,193.7 18,193.7 19,193.7 20,193.7 21,193.7 22,193.7 23,193.7 24,193.7 25,193.7 26,193.7 27,193.7 28,193.7 29,193.7 30,193.7 31,193.7 32,193.8 33,193.8 34,193.8 35,193.8 36,193.9 37,193.9 38,194.0 39,194.0 40,194.1 41,194.2 42,194.3 43,194.4 44,194.6 45,194.7 46,194.8 47,195.0 48,195.1 49,195.3 50,195.4 51,195.5 52,195.6 53,195.6 54,195.7 55,195.7 56,195.7 57,195.6 58,195.6 59,195.5 60,195.4 61,195.3 62,195.1 63,195.0 64,194.8 65,194.7 66,194.6 67,194.4 68,194.3 69,194.2 70,194.1 71,194.0 72,194.0 73,193.9 74,193.9 75,193.8 76,193.8 77,193.8 78,193.8 79,193.7 80,193.7 81,193.7 82,193.7 83,193.7 84,193.7 85,193.7 86,193.7 87,193.7 88,193.7 89,193.7 90,193.7 91,193.7 92,193.7 93,193.7 94,193.7 95,193.7 96,193.7 97,193.7 98,193.7 99,193.7 100,193.7 101,193.7 102,193.7 103,193.7 104,193.7 105,193.7 106,193.7 107,193.7 108,193.7 109,193.7 110,193.7 111,193.7 112,193.8 113,193.8 114,193.8 115,193.9 116,193.9 117,194.0 118,194.1 119,194.2 120,194.3 121,194.5 122,194.6 123,194.9 124,195.1 125,195.4 126,195.6 127,195.9 128,196.3 129,196.6 130,196.9 131,197.2 132,197.5 133,197.7 134,197.9 135,198.1 136,198.2 137,198.2 138,198.2 139,198.1 140,197.9 141,197.7 142,197.5 143,197.2 144,196.9 145,196.6 146,196.3 147,195.9 148,195.6 149,195.4 150,195.1 151,194.9 152,194.6 153,194.5 154,194.3 155,194.2 156,194.1 157,194.0 158,193.9 159,193.9 160,193.8 161,193.8 162,193.8 163,193.7 164,193.7 165,193.7 166,193.7 167,193.7 168,193.7 169,193.7 170,193.7 171,193.7 172,193.7 173,193.7 174,193.7 175,193.7 176,193.7 177,193.7 178,193.7 179,193.7 180,193.7 181,193.8 182,193.8 183,193.8 184,193.9 185,193.9 186,194.0 187,194.1 188,194.2 189,194.3 190,194.4 191,194.6 192,194.8 193,194.9 194,195.1 195,195.3 196,195.4 197,195.5 198,195.6 199,195.7 200,195.7 201,195.6 202,195.5 203,195.4 204,195.3 205,195.1 206,194.9 207,194.7 208,194.5 209,194.3 210,194.1 211,193.9 212,193.8 213,193.6 214,193.5 215,193.4 216,193.3 217,193.3 218,193.2 219,193.1 220,193.1 221,193.0 222,193.0 223,193.0 224,192.9 225,192.9 226,192.9 227,192.8 228,192.8 229,192.8 230,192.7 231,192.7 232,192.9 233,193.1 234,193.4 235,193.6 236,193.8 237,194.0 238,194.1 239,194.3 240,194.5 241,194.7 242,194.8 243,195.1 244,195.4 245,195.7 246,196.0 247,196.3 248,196.6 249,197.0 250,197.3 251,197.6 252,197.9 253,198.2 254,198.5 255,198.8 256,199.1 257,199.5 258,199.8 259,200.3 260,201.2 261,202.0 262,202.8 263,203.7 264,204.5 265,205.3 266,206.2 267,207.0 268,207.8 269,208.6 270,209.3 271,210.0 272,210.8 273,211.5 274,212.2 275,213.0 276,213.7 277,214.4 278,215.2 279,216.1 280,217.1 281,218.0 282,219.0 283,219.9 284,220.9 285,221.8 286,222.8 287,223.7 288,224.7 289,225.8 290,226.9 291,228.0 292,229.0 293,230.1 294,231.2 295,232.4 296,233.7 297,235.0 298,236.2 299,237.5 300,238.7" fill="none" stroke="#00a800" stroke-width="1" shape-rendering="crispEdges"/>
<polyline points="299,237.5 300,238.7 301,240.0 302,241.3 303,242.8 304,244.3 305,245.8 306,247.3 307,248.8 308,250.3 309,251.8 310,253.4 311,255.2 312,256.9 313,258.7 314,260.4 315,262.2 316,263.9 317,265.7 318,267.4 319,269.0 320,270.6 321,272.2 322,273.8 323,275.4 324,277.0 325,278.8 326,280.7 327,282.6 328,284.5 329,286.5 330,288.4 331,290.3 332,292.2 333,294.1 334,296.1 335,298.0 336,299.9 337,301.6 338,303.3 339,305.0 340,306.8 341,308.5 342,310.2 343,311.9 344,313.6 345,315.3 346,317.2 347,319.0 348,320.9 349,322.8 350,324.6 351,326.5 352,328.4 353,330.2 354,332.1 355,334.2 356,336.3 357,338.4 358,340.6 359,342.7 360,344.8 361,346.9 362,349.0 363,351.2 364,353.1 365,355.0 366,356.9 367,358.7 368,360.6 369,362.5 370,364.4 371,366.3 372,368.1 373,369.8 374,371.3 375,372.9 376,374.5 377,376.0 378,377.6 379,379.1 380,380.7 381,382.3 382,383.8 383,385.4 384,387.0 385,388.7 386,390.3 387,392.0 388,393.7 389,395.3 390,397.0 391,398.7 392,400.5 393,402.3 394,404.2 395,406.0 396,407.9 397,409.7 398,411.6 399,413.4 400,415.2 401,416.7 402,418.1 403,419.4 404,420.7 405,422.1 406,423.4 407,424.7 408,426.1 409,427.1 410,428.1 411,429.1 412,430.1 413,431.2 414,432.2 415,433.2 416,434.2 417,435.2 418,436.2 419,437.2 420,438.2 421,439.2 422,440.2 423,441.2 424,442.2 425,443.2 426,444.2 427,445.2 428,446.3 429,447.4 430,448.6 431,449.7 432,450.9 433,452.0 434,453.2 435,454.3 436,455.5 437,456.6 438,457.8 439,458.9 440,460.1 441,461.2 442,462.4 443,463.7 444,464.9 445,466.1 446,467.3 447,468.5 448,469.7 449,470.9 450,472.1 451,473.3 452,474.5 453,475.5 454,476.3 455,477.1 456,477.9 457,478.7 458,479.5 459,480.3 460,481.1 461,481.9 462,482.7 463,483.5 464,484.3 465,485.0 466,485.6 467,486.2 468,486.8 469,487.4 470,488.0 471,488.5 472,489.1 473,489.7 474,490.2 475,490.8 476,491.4 477,492.0 478,492.5 479,493.1 480,493.7 481,494.3 482,494.9 483,495.5 484,496.1 485,496.7 486,497.3 487,497.7 488,498.1 489,498.5 490,498.9 491,499.3 492,499.7 493,500.2 494,500.6 495,501.0 496,501.4 497,501.9 498,502.3 499,502.7 500,503.1 501,503.6 502,504.0 503,504.4 504,504.8 505,505.2 506,505.6 507,505.9 508,506.3 509,506.7 510,507.0 511,507.4 512,507.7 513,508.1 514,508.4 515,508.7 516,509.0 517,509.2 518,509.5 519,509.7 520,509.9 521,510.1 522,510.3 523,510.5 524,510.7 525,510.9 526,511.1 527,511.2 528,511.4 529,511.6 530,511.8 531,512.1 532,512.3 533,512.6 534,512.8 535,513.1 536,513.3 537,513.6 538,513.9 539,514.2 540,514.5 541,514.8 542,515.0 543,515.0 544,515.1 545,515.1 546,515.2 547,515.2 548,515.3 549,515.4 550,515.5 551,515.6 552,515.7 553,515.9 554,516.0 555,516.1 556,516.3 557,516.4 558,516.6 559,516.8 560,516.9 561,517.1 562,517.3 563,517.4 564,517.6 565,517.8 566,517.9 567,518.1 568,518.2 569,518.4 570,518.5 571,518.6 572,518.7 573,518.9 574,519.0 575,519.1 576,519.1 577,519.2 578,519.3 579,519.3 580,519.4 581,519.4 582,519.4 583,519.3 584,519.3 585,519.2 586,519.1 587,519.0 588,518.9 589,518.8 590,518.7 591,518.6 592,518.5 593,518.3 594,518.2 595,518.1 596,517.9 597,517.8 598,517.6 599,517.5 600,517.3 601,517.2 602,517.0 603,516.9 604,516.7 605,516.6 606,516.5 607,516.3 608,516.2 609,516.1 610,516.0 611,515.9 612,515.9 613,515.8 614,515.7 615,515.7 616,515.7 617,515.6 618,515.6 619,515.6 620,515.6 621,515.6 622,515.7 623,515.7 624,515.8 625,515.8 626,515.9 627,516.0 628,516.1 629,516.2 630,516.3 631,516.4 632,516.5 633,516.6 634,516.8 635,516.9 636,517.0 637,517.1 638,517.3 639,517.4 640,517.5 641,517.6 642,517.7 643,517.8 644,517.9 645,518.0 646,518.0 647,518.1 648,518.1 649,518.1 650,518.1 651,518.1 652,518.1 653,518.0 654,517.9 655,517.8 656,517.7 657,517.6 658,517.4 659,517.2 660,517.0 661,516.8 662,516.5 663,516.3 664,516.0 665,515.7 666,515.4 667,515.1 668,514.8 669,514.5 670,514.2 671,514.0 672,513.7 673,513.4 674,513.2 675,513.0 676,512.8 677,512.7 678,512.6 679,512.5 680,512.5 681,512.5 682,512.5 683,512.5 684,512.6 685,512.7 686,512.9 687,513.0 688,513.2 689,513.4 690,513.6 691,513.8 692,514.1 693,514.3 694,514.6 695,514.8 696,515.1 697,515.3 698,515.6 699,515.8 700,516.1 701,516.3 702,516.6 703,516.8 704,517.1 705,517.3 706,517.5 707,517.8 708,518.0 709,518.2 710,518.4 711,518.6 712,518.8 713,519.0 714,519.2 715,519.3 716,519.5 717,519.7 718,519.8 719,520.0 720,520.1 721,520.2 722,520.3 723,520.3 724,520.4 725,520.5 726,520.5 727,520.5 728,520.6 729,520.6 730,520.6 731,520.6 732,520.5 733,520.5 734,520.4 735,520.4 736,520.3 737,520.2 738,520.1 739,520.0 740,519.9 741,519.8 742,519.7 743,519.6 744,519.4 745,519.3 746,519.2 747,519.0 748,518.9 749,518.8 750,518.6 751,518.5 752,518.4 753,518.3 754,518.1 755,518.0 756,517.9 757,517.8 758,517.7 759,517.7 760,517.6 761,517.5 762,517.5 763,517.4 764,517.4 765,517.4 766,517.4 767,517.4 768,517.4 769,517.5 770,517.5 771,517.5 772,517.6 773,517.7 774,517.7 775,517.8 776,517.9 777,518.0 778,518.1 779,518.3 780,518.4 781,518.5 782,518.6 783,518.7 784,518.9 785,519.0 786,519.1 787,519.2 788,519.4 789,519.5 790,519.6 791,519.7 792,519.8 793,519.9 794,520.0 795,520.0 796,520.1 797,520.2 798,520.2 799,520.2 800,520.3 801,520.3 802,520.3 803,520.3 804,520.2 805,520.2 806,520.2 807,520.1 808,520.0 809,520.0 810,519.9 811,519.8 812,519.7 813,519.6 814,519.5 815,519.4 816,519.2 817,519.1 818,519.0 819,518.8 820,518.7 821,518.6 822,518.4 823,518.3 824,518.2 825,518.0 826,517.9 827,517.8 828,517.7 829,517.6 830,517.5 831,517.4 832,517.3 833,517.3 834,517.2 835,517.2 836,517.2 837,517.1 838,517.1 839,517.1 840,517.1 841,517.2 842,517.2 843,517.3 844,517.3 845,517.4 846,517.5 847,517.6 848,517.7 849,517.8 850,517.9 851,518.1 852,518.2 853,518.3 854,518.5 855,518.6 856,518.8 857,518.9 858,519.1 859,519.3 860,519.4 861,519.6 862,519.7 863,519.9 864,520.0 865,520.2 866,520.3 867,520.4 868,520.5 869,520.6 870,520.7 871,520.8 872,520.9 873,521.0 874,521.0 875,521.1 876,521.1 877,521.1 878,521.1 879,521.1 880,521.1 881,521.1 882,521.1 883,521.0 884,521.0 885,520.9 886,520.9 887,520.8 888,520.7 889,520.6 890,520.5 891,520.4 892,520.3 893,520.2 894,520.1 895,520.0 896,519.9 897,519.8 898,519.7 899,519.6 900,519.5 901,519.4 902,519.3 903,519.2 904,519.1 905,519.1 906,519.0 907,519.0 908,518.9 909,518.9 910,518.9 911,518.9 912,518.9 913,518.9 914,519.0 915,519.0 916,519.1 917,519.2 918,519.2 919,519.3 920,519.4 921,519.6 922,519.7 923,519.8 924,519.9 925,520.1 926,520.2 927,520.4 928,520.6 929,520.7 930,520.9 931,521.0 932,521.2 933,521.4 934,521.5 935,521.7 936,521.8 937,522.0 938,522.1 939,522.3 940,522.4 941,522.5 942,522.6 943,522.7 944,522.8 945,522.9 946,523.0 947,523.1 948,523.1 949,523.1 950,523.1 951,523.1 952,523.1 953,523.1 954,523.0 955,523.0 956,522.9 957,522.9 958,522.8 959,522.7 960,522.6 961,522.5 962,522.3 963,522.2 964,522.1 965,521.9 966,521.8 967,521.7 968,521.5 969,521.4 970,521.2 971,521.1 972,521.0 973,520.8 974,520.7 975,520.6 976,520.4 977,520.3 978,520.2 979,520.1 980,520.0 981,519.9 982,519.9 983,519.8 984,519.7 985,519.7 986,519.7 987,519.7 988,519.7 989,519.7 990,519.7 991,519.7 992,519.8 993,519.8 994,519.9 995,519.9 996,520.0 997,520.1 998,520.2 999,520.3 1000,520.4 1001,520.5 1002,520.6 1003,520.8 1004,520.9 1005,521.0 1006,521.2 1007,521.3 1008,521.4 1009,521.5 1010,521.7 1011,521.8 1012,521.9 1013,522.0 1014,522.1 1015,522.2 1016,522.3" fill="none" stroke="#00ff00" stroke-width="1" shape-rendering="crispEdges"/>
<polyline points="17,191.5 18,191.6 19,191.6 20,191.7 21,191.8 22,191.8 23,191.9 24,192.0 25,192.0 26,192.1 27,192.2 28,192.3 29,192.4 30,192.5 31,192.5 32,192.6 33,192.7 34,192.8 35,192.9 36,192.9 37,193.0 38,193.1 39,193.2 40,193.2 41,193.3 42,193.4 43,193.4 44,193.5 45,193.5 46,193.6 47,193.6 48,193.6 49,193.7 50,193.7 51,193.7 52,193.7 53,193.7 54,193.7 55,193.7 56,193.7 57,193.7 58,193.6 59,193.6 60,193.6 61,193.5 62,193.5 63,193.4 64,193.4 65,193.3 66,193.2 67,193.2 68,193.1 69,193.0 70,192.9 71,192.9 72,192.8 73,192.7 74,192.6 75,192.5 76,192.5 77,192.4 78,192.3 79,192.2 80,192.1 81,192.0 82,192.0 83,191.9 84,191.8 85,191.8 86,191.7 87,191.6 88,191.6 89,191.5 90,191.5 91,191.4 92,191.4 93,191.4 94,191.3 95,191.3 96,191.3 97,191.3 98,191.3 99,191.3 100,191.3 101,191.3 102,191.3 103,191.4 104,191.4 105,191.4 106,191.5 107,191.5 108,191.6 109,191.6 110,191.7 111,191.8 112,191.8 113,191.9 114,192.0 115,192.1 116,192.1 117,192.2 118,192.3 119,192.4 120,192.5 121,192.6 122,192.6 123,192.7 124,192.8 125,192.9 126,193.0 127,193.0 128,193.1 129,193.2 130,193.3 131,193.3 132,193.4 133,193.4 134,193.5 135,193.5 136,193.6 137,193.6 138,193.6 139,193.7 140,193.7 141,193.7 142,193.7 143,193.7 144,193.7 145,193.7 146,193.7 147,193.6 148,193.6 149,193.6 150,193.6 151,193.5 152,193.5 153,193.4 154,193.3 155,193.3 156,193.2 157,193.2 158,193.1 159,193.0 160,192.9 161,192.9 162,192.8 163,192.7 164,192.6 165,192.5 166,192.4 167,192.4 168,192.3 169,192.2 170,192.1 171,192.0 172,192.0 173,191.9 174,191.8 175,191.7 176,191.7 177,191.6 178,191.6 179,191.5 180,191.5 181,191.4 182,191.4 183,191.4 184,191.3 185,191.3 186,191.3 187,191.3 188,191.3 189,191.3 190,191.3 191,191.3 192,191.4 193,191.4 194,191.4 195,191.5 196,191.5 197,191.5 198,191.6 199,191.7 200,191.7 201,191.8 202,191.8 203,191.9 204,191.9 205,192.0 206,192.0 207,192.0 208,192.1 209,192.2 210,192.2 211,192.3 212,192.3 213,192.4 214,192.4 215,192.5 216,192.5 217,192.6 218,192.6 219,192.6 220,192.7 221,192.7 222,192.7 223,192.8 224,192.8 225,192.8 226,192.8 227,192.8 228,192.8 229,192.8 230,192.8 231,192.8 232,192.7 233,192.7 234,192.9 235,193.2 236,193.4 237,193.5 238,193.7 239,193.8 240,193.9 241,194.1 242,194.2 243,194.4 244,194.5 245,194.8 246,195.1 247,195.4 248,195.7 249,196.0 250,196.4 251,196.7 252,197.0 253,197.4 254,197.7 255,198.1 256,198.4 257,198.8 258,199.2 259,199.5 260,199.9 261,200.5 262,201.3 263,202.2 264,203.0 265,203.8 266,204.7 267,205.5 268,206.3 269,207.2 270,208.0 271,208.7 272,209.4 273,210.2 274,210.9 275,211.6 276,212.4 277,213.1 278,213.8 279,214.6 280,215.4 281,216.3 282,217.3 283,218.2 284,219.2 285,220.1 286,221.1 287,222.0 288,223.0 289,223.9 290,225.0 291,226.0 292,227.1 293,228.2 294,229.3 295,230.3 296,231.4 297,232.7 298,233.9 299,235.2 300,236.5" fill="none" stroke="#00e000" stroke-width="1" shape-rendering="crispEdges"/>
<polyline points="299,235.2 300,236.5 301,237.7 302,239.0 303,240.2 304,241.6 305,243.1 306,244.6 307,246.1 308,247.6 309,249.1 310,250.6 311,252.1 312,253.8 313,255.5 314,257.3 315,259.0 316,260.8 317,262.5 318,264.3 319,266.0 320,267.7 321,269.3 322,270.9 323,272.5 324,274.1 325,275.7 326,277.4 327,279.2 328,281.1 329,283.0 330,284.9 331,286.8 332,288.8 333,290.7 334,292.6 335,294.5 336,296.4 337,298.4 338,300.2 339,302.0 340,303.7 341,305.4 342,307.1 343,308.8 344,310.5 345,312.2 346,314.0 347,315.7 348,317.6 349,319.4 350,321.3 351,323.2 352,325.0 353,326.9 354,328.8 355,330.6 356,332.5 357,334.6 358,336.8 359,338.9 360,341.0 361,343.1 362,345.2 363,347.3 364,349.5 365,351.6 366,353.5 367,355.4 368,357.2 369,359.1 370,361.0 371,362.9 372,364.8 373,366.6 374,368.5 375,370.1 376,371.7 377,373.2 378,374.8 379,376.3 380,377.9 381,379.5 382,381.0 383,382.6 384,384.1 385,385.7 386,387.3 387,389.0 388,390.7 389,392.3 390,394.0 391,395.7 392,397.3 393,399.0 394,400.8 395,402.7 396,404.5 397,406.4 398,408.2 399,410.1 400,411.9 401,413.8 402,415.6 403,417.0 404,418.3 405,419.7 406,421.0 407,422.3 408,423.7 409,425.0 410,426.3 411,427.3 412,428.3 413,429.3 414,430.3 415,431.4 416,432.4 417,433.4 418,434.4 419,435.4 420,436.4 421,437.4 422,438.4 423,439.4 424,440.4 425,441.4 426,442.4 427,443.4 428,444.4 429,445.4 430,446.5 431,447.7 432,448.8 433,450.0 434,451.1 435,452.3 436,453.4 437,454.6 438,455.7 439,456.9 440,458.0 441,459.2 442,460.3 443,461.5 444,462.7 445,463.9 446,465.1 447,466.3 448,467.5 449,468.7 450,469.9 451,471.1 452,472.3 453,473.5 454,474.7 455,475.7 456,476.5 457,477.3 458,478.1 459,478.9 460,479.7 461,480.5 462,481.3 463,482.1 464,482.9 465,483.7 466,484.5 467,485.1 468,485.7 469,486.3 470,486.9 471,487.5 472,488.1 473,488.8 474,489.4 475,490.1 476,490.7 477,491.3 478,492.0 479,492.6 480,493.2 481,493.9 482,494.5 483,495.1 484,495.7 485,496.3 486,497.0 487,497.6 488,498.2 489,498.5 490,498.9 491,499.3 492,499.6 493,500.0 494,500.3 495,500.7 496,501.0 497,501.3 498,501.6 499,501.9 500,502.2 501,502.5 502,502.8 503,503.1 504,503.4 505,503.6 506,503.9 507,504.1 508,504.4 509,504.6 510,504.9 511,505.1 512,505.4 513,505.6 514,505.8 515,506.0 516,506.3 517,506.5 518,506.7 519,506.9 520,507.1 521,507.3 522,507.5 523,507.8 524,508.0 525,508.2 526,508.5 527,508.8 528,509.0 529,509.3 530,509.6 531,510.0 532,510.4 533,510.8 534,511.1 535,511.5 536,512.0 537,512.4 538,512.8 539,513.2 540,513.7 541,514.1 542,514.6 543,515.0 544,515.3 545,515.4 546,515.6 547,515.7 548,515.9 549,516.1 550,516.2 551,516.4 552,516.6 553,516.7 554,516.9 555,517.1 556,517.2 557,517.4 558,517.5 559,517.7 560,517.9 561,518.0 562,518.1 563,518.3 564,518.4 565,518.6 566,518.7 567,518.8 568,519.0 569,519.1 570,519.2 571,519.3 572,519.4 573,519.5 574,519.6 575,519.8 576,519.9 577,520.0 578,520.1 579,520.2 580,520.2 581,520.3 582,520.4 583,520.5 584,520.5 585,520.6 586,520.6 587,520.6 588,520.6 589,520.6 590,520.6 591,520.6 592,520.6 593,520.5 594,520.5 595,520.4 596,520.4 597,520.3 598,520.2 599,520.1 600,520.0 601,519.9 602,519.7 603,519.6 604,519.4 605,519.3 606,519.1 607,519.0 608,518.8 609,518.7 610,518.5 611,518.3 612,518.2 613,518.0 614,517.9 615,517.7 616,517.6 617,517.5 618,517.4 619,517.3 620,517.2 621,517.1 622,517.0 623,517.0 624,517.0 625,516.9 626,516.9 627,516.9 628,516.9 629,517.0 630,517.0 631,517.1 632,517.1 633,517.2 634,517.3 635,517.4 636,517.5 637,517.6 638,517.7 639,517.8 640,517.9 641,518.0 642,518.1 643,518.2 644,518.3 645,518.4 646,518.5 647,518.6 648,518.7 649,518.8 650,518.9 651,519.0 652,519.0 653,519.1 654,519.1 655,519.2 656,519.2 657,519.2 658,519.3 659,519.3 660,519.3 661,519.3 662,519.2 663,519.2 664,519.2 665,519.1 666,519.1 667,519.0 668,518.9 669,518.9 670,518.8 671,518.7 672,518.6 673,518.5 674,518.4 675,518.3 676,518.2 677,518.0 678,517.9 679,517.8 680,517.7 681,517.6 682,517.5 683,517.4 684,517.3 685,517.2 686,517.1 687,517.1 688,517.0 689,516.9 690,516.8 691,516.8 692,516.7 693,516.6 694,516.6 695,516.6 696,516.5 697,516.5 698,516.5 699,516.5 700,516.5 701,516.5 702,516.5 703,516.5 704,516.6 705,516.6 706,516.7 707,516.8 708,516.8 709,516.9 710,517.0 711,517.1 712,517.2 713,517.3 714,517.4 715,517.5 716,517.7 717,517.8 718,517.9 719,518.1 720,518.2 721,518.4 722,518.5 723,518.6 724,518.8 725,518.9 726,519.0 727,519.2 728,519.3 729,519.4 730,519.6 731,519.7 732,519.8 733,519.9 734,520.0 735,520.1 736,520.2 737,520.3 738,520.4 739,520.4 740,520.5 741,520.5 742,520.6 743,520.6 744,520.6 745,520.6 746,520.6 747,520.6 748,520.6 749,520.6 750,520.6 751,520.5 752,520.5 753,520.4 754,520.3 755,520.3 756,520.2 757,520.1 758,520.0 759,519.9 760,519.8 761,519.7 762,519.5 763,519.4 764,519.3 765,519.2 766,519.0 767,518.9 768,518.8 769,518.6 770,518.5 771,518.4 772,518.2 773,518.1 774,518.0 775,517.9 776,517.7 777,517.6 778,517.5 779,517.4 780,517.3 781,517.2 782,517.2 783,517.1 784,517.0 785,517.0 786,516.9 787,516.9 788,516.9 789,516.9 790,516.9 791,516.9 792,516.9 793,516.9 794,516.9 795,517.0 796,517.0 797,517.1 798,517.2 799,517.2 800,517.3 801,517.4 802,517.5 803,517.6 804,517.7 805,517.8 806,517.9 807,518.1 808,518.2 809,518.3 810,518.4 811,518.6 812,518.7 813,518.8 814,519.0 815,519.1 816,519.2 817,519.3 818,519.5 819,519.6 820,519.7 821,519.8 822,519.9 823,520.0 824,520.1 825,520.2 826,520.3 827,520.3 828,520.4 829,520.4 830,520.5 831,520.5 832,520.5 833,520.6 834,520.6 835,520.6 836,520.6 837,520.5 838,520.5 839,520.5 840,520.4 841,520.4 842,520.3 843,520.2 844,520.2 845,520.1 846,520.0 847,519.9 848,519.8 849,519.7 850,519.6 851,519.5 852,519.4 853,519.3 854,519.2 855,519.1 856,519.0 857,518.8 858,518.7 859,518.6 860,518.5 861,518.4 862,518.3 863,518.2 864,518.1 865,518.1 866,518.0 867,517.9 868,517.9 869,517.8 870,517.8 871,517.7 872,517.7 873,517.7 874,517.7 875,517.7 876,517.7 877,517.7 878,517.7 879,517.7 880,517.8 881,517.8 882,517.9 883,518.0 884,518.1 885,518.2 886,518.3 887,518.4 888,518.5 889,518.6 890,518.7 891,518.8 892,519.0 893,519.1 894,519.3 895,519.4 896,519.6 897,519.7 898,519.9 899,520.0 900,520.2 901,520.3 902,520.5 903,520.6 904,520.8 905,520.9 906,521.1 907,521.2 908,521.3 909,521.5 910,521.6 911,521.7 912,521.8 913,521.9 914,522.0 915,522.2 916,522.3 917,522.4 918,522.5 919,522.6 920,522.7 921,522.7 922,522.8 923,522.9 924,523.0 925,523.1 926,523.1 927,523.2 928,523.3 929,523.3 930,523.4 931,523.5 932,523.5 933,523.6 934,523.6 935,523.7 936,523.7 937,523.8 938,523.8 939,523.8 940,523.9 941,523.9 942,523.9 943,523.9 944,523.9 945,523.8 946,523.8 947,523.8 948,523.7 949,523.6 950,523.5 951,523.5 952,523.3 953,523.2 954,523.1 955,522.9 956,522.8 957,522.6 958,522.5 959,522.3 960,522.2 961,522.0 962,521.9 963,521.7 964,521.6 965,521.5 966,521.4 967,521.3 968,521.2 969,521.1 970,521.0 971,521.0 972,520.9 973,520.9 974,520.9 975,520.9 976,520.9 977,520.9 978,521.0 979,521.0 980,521.1 981,521.2 982,521.3 983,521.3 984,521.4 985,521.5 986,521.6 987,521.7 988,521.8 989,522.0 990,522.1 991,522.2 992,522.3 993,522.4 994,522.5 995,522.6 996,522.7 997,522.8 998,522.8 999,522.9 1000,523.0 1001,523.0 1002,523.1 1003,523.1 1004,523.2 1005,523.2 1006,523.2 1007,523.2 1008,523.2 1009,523.2 1010,523.2 1011,523.1 1012,523.1 1013,523.1 1014,523.0 1015,522.9 1016,522.9" fill="none" stroke="#00ff00" stroke-width="1" shape-rendering="crispEdges"/>
<polyline points="17,192.5 18,192.5 19,192.5 20,192.5 21,192.5 22,192.5 23,192.5 24,192.5 25,192.5 26,192.5 27,192.5 28,192.5 29,192.5 30,192.5 31,192.5 32,192.5 33,192.5 34,192.5 35,192.5 36,192.5 37,192.5 38,192.5 39,192.5 40,192.5 41,192.5 42,192.5 43,192.5 44,192.5 45,192.5 46,192.5 47,192.5 48,192.5 49,192.5 50,192.5 51,192.5 52,192.5 53,192.5 54,192.5 55,192.5 56,192.5 57,192.5 58,192.5 59,192.5 60,192.5 61,192.5 62,192.5 63,192.5 64,192.5 65,192.5 66,192.5 67,192.5 68,192.5 69,192.5 70,192.5 71,192.5 72,192.5 73,192.5 74,192.5 75,192.5 76,192.5 77,192.5 78,192.5 79,192.5 80,192.5 81,192.5 82,192.5 83,192.5 84,192.5 85,192.5 86,192.5 87,192.5 88,192.5 89,192.5 90,192.5 91,192.5 92,192.5 93,192.5 94,192.5 95,192.5 96,192.5 97,192.5 98,192.5 99,192.5 100,192.5 101,192.5 102,192.5 103,192.5 104,192.5 105,192.5 106,192.5 107,192.5 108,192.5 109,192.5 110,192.5 111,192.5 112,192.5 113,192.5 114,192.5 115,192.5 116,192.5 117,192.5 118,192.5 119,192.5 120,192.5 121,192.5 122,192.5 123,192.5 124,192.5 125,192.5 126,192.5 127,192.5 128,192.5 129,192.5 130,192.5 131,192.5 132,192.5 133,192.5 134,192.5 135,192.5 136,192.5 137,192.5 138,192.5 139,192.5 140,192.5 141,192.5 142,192.5 143,192.5 144,192.5 145,192.5 146,192.5 147,192.4 148,192.4 149,192.4 150,192.3 151,192.2 152,192.1 153,192.0 154,191.8 155,191.6 156,191.4 157,191.1 158,190.7 159,190.3 160,189.9 161,189.3 162,188.8 163,188.3 164,187.7 165,187.2 166,186.6 167,186.2 168,185.8 169,185.5 170,185.4 171,185.3 172,185.4 173,185.5 174,185.8 175,186.2 176,186.6 177,187.2 178,187.7 179,188.3 180,188.8 181,189.3 182,189.9 183,190.3 184,190.7 185,191.1 186,191.4 187,191.6 188,191.8 189,192.0 190,192.1 191,192.2 192,192.3 193,192.4 194,192.4 195,192.4 196,192.5 197,192.5 198,192.5 199,192.5 200,192.4 201,192.4 202,192.4 203,192.3 204,192.3 205,192.3 206,192.2 207,192.2 208,192.2 209,192.1 210,192.1 211,192.1 212,192.1 213,192.0 214,192.0 215,192.0 216,191.9 217,191.9 218,191.9 219,191.8 220,191.8 221,191.8 222,191.7 223,191.7 224,191.7 225,191.6 226,191.6 227,191.6 228,191.6 229,191.5 230,191.5 231,191.8 232,192.0 233,192.2 234,192.5 235,192.7 236,192.9 237,193.1 238,193.4 239,193.6 240,193.8 241,194.1 242,194.4 243,194.8 244,195.2 245,195.5 246,195.9 247,196.3 248,196.6 249,197.0 250,197.4 251,197.7 252,198.1 253,198.5 254,198.9 255,199.2 256,199.6 257,200.0 258,200.6 259,201.4 260,202.3 261,203.1 262,203.9 263,204.7 264,205.6 265,206.4 266,207.2 267,208.0 268,208.8 269,209.5 270,210.2 271,211.0 272,211.7 273,212.4 274,213.2 275,213.9 276,214.6 277,215.5 278,216.4 279,217.4 280,218.3 281,219.3 282,220.2 283,221.2 284,222.1 285,223.1 286,224.0 287,225.1 288,226.1 289,227.2 290,228.3 291,229.4 292,230.4 293,231.6 294,232.8 295,234.1 296,235.3 297,236.6 298,237.9 299,239.1 300,240.4" fill="none" stroke="#00ff00" stroke-width="1" shape-rendering="crispEdges"/>
<polyline points="299,239.1 300,240.4 301,241.8 302,243.2 303,244.8 304,246.2 305,247.7 306,249.2 307,250.7 308,252.2 309,253.9 310,255.7 311,257.4 312,259.2 313,261.0 314,262.7 315,264.5 316,266.2 317,267.8 318,269.5 319,271.1 320,272.7 321,274.3 322,275.9 323,277.5 324,279.3 325,281.3 326,283.2 327,285.1 328,287.0 329,288.9 330,290.9 331,292.8 332,294.7 333,296.6 334,298.6 335,300.4 336,302.1 337,303.8 338,305.6 339,307.3 340,309.0 341,310.7 342,312.4 343,314.1 344,315.9 345,317.7 346,319.6 347,321.5 348,323.3 349,325.2 350,327.1 351,328.9 352,330.8 353,332.7 354,334.8 355,337.0 356,339.1 357,341.2 358,343.3 359,345.4 360,347.6 361,349.7 362,351.8 363,353.7 364,355.6 365,357.4 366,359.3 367,361.2 368,363.1 369,364.9 370,366.8 371,368.7 372,370.3 373,371.8 374,373.4 375,374.9 376,376.5 377,378.1 378,379.6 379,381.2 380,382.7 381,384.3 382,385.8 383,387.5 384,389.2 385,390.8 386,392.5 387,394.2 388,395.8 389,397.5 390,399.2 391,401.0 392,402.9 393,404.7 394,406.6 395,408.4 396,410.3 397,412.1 398,414.0 399,415.8 400,417.1 401,418.5 402,419.8 403,421.1 404,422.5 405,423.8 406,425.1 407,426.4 408,427.4 409,428.4 410,429.4 411,430.4 412,431.5 413,432.5 414,433.5 415,434.5 416,435.5 417,436.5 418,437.5 419,438.5 420,439.5 421,440.5 422,441.5 423,442.5 424,443.5 425,444.5 426,445.5 427,446.6 428,447.8 429,448.9 430,450.1 431,451.2 432,452.4 433,453.5 434,454.7 435,455.8 436,457.0 437,458.1 438,459.3 439,460.4 440,461.6 441,462.8 442,464.0 443,465.2 444,466.4 445,467.6 446,468.8 447,470.0 448,471.2 449,472.4 450,473.7 451,474.9 452,475.7 453,476.5 454,477.3 455,478.2 456,479.0 457,479.8 458,480.6 459,481.4 460,482.2 461,483.0 462,483.8 463,484.6 464,485.2 465,485.8 466,486.4 467,487.0 468,487.6 469,488.1 470,488.7 471,489.4 472,490.0 473,490.6 474,491.2 475,491.8 476,492.3 477,492.9 478,493.4 479,494.0 480,494.5 481,495.0 482,495.6 483,496.1 484,496.6 485,497.1 486,497.3 487,497.6 488,497.9 489,498.1 490,498.4 491,498.7 492,499.0 493,499.3 494,499.6 495,499.9 496,500.2 497,500.5 498,500.8 499,501.1 500,501.5 501,501.8 502,502.2 503,502.5 504,502.9 505,503.3 506,503.7 507,504.1 508,504.6 509,505.0 510,505.4 511,505.9 512,506.4 513,506.8 514,507.3 515,507.7 516,508.2 517,508.6 518,509.1 519,509.5 520,509.9 521,510.3 522,510.8 523,511.2 524,511.6 525,511.9 526,512.3 527,512.6 528,513.0 529,513.3 530,513.6 531,513.9 532,514.2 533,514.5 534,514.8 535,515.0 536,515.3 537,515.5 538,515.7 539,515.9 540,516.1 541,516.1 542,515.9 543,515.8 544,515.7 545,515.6 546,515.4 547,515.3 548,515.2 549,515.1 550,515.0 551,514.9 552,514.8 553,514.7 554,514.6 555,514.6 556,514.6 557,514.5 558,514.5 559,514.6 560,514.6 561,514.6 562,514.7 563,514.8 564,514.9 565,515.0 566,515.1 567,515.3 568,515.5 569,515.6 570,515.8 571,516.0 572,516.2 573,516.5 574,516.7 575,516.9 576,517.1 577,517.4 578,517.6 579,517.9 580,518.1 581,518.3 582,518.5 583,518.6 584,518.8 585,518.9 586,519.1 587,519.2 588,519.3 589,519.4 590,519.5 591,519.6 592,519.6 593,519.7 594,519.7 595,519.7 596,519.7 597,519.7 598,519.6 599,519.6 600,519.5 601,519.4 602,519.3 603,519.2 604,519.0 605,518.9 606,518.7 607,518.6 608,518.4 609,518.3 610,518.1 611,517.9 612,517.8 613,517.6 614,517.4 615,517.3 616,517.1 617,517.0 618,516.8 619,516.7 620,516.6 621,516.5 622,516.4 623,516.3 624,516.3 625,516.2 626,516.2 627,516.2 628,516.2 629,516.2 630,516.3 631,516.3 632,516.4 633,516.5 634,516.6 635,516.7 636,516.9 637,517.0 638,517.1 639,517.3 640,517.5 641,517.6 642,517.8 643,518.0 644,518.2 645,518.4 646,518.5 647,518.7 648,518.9 649,519.0 650,519.2 651,519.3 652,519.4 653,519.5 654,519.6 655,519.7 656,519.8 657,519.9 658,519.9 659,519.9 660,519.9 661,519.9 662,519.9 663,519.8 664,519.7 665,519.7 666,519.6 667,519.5 668,519.3 669,519.2 670,519.0 671,518.9 672,518.7 673,518.5 674,518.3 675,518.2 676,518.0 677,517.8 678,517.7 679,517.5 680,517.3 681,517.2 682,517.0 683,516.9 684,516.8 685,516.7 686,516.6 687,516.5 688,516.4 689,516.3 690,516.3 691,516.3 692,516.3 693,516.3 694,516.3 695,516.3 696,516.4 697,516.4 698,516.5 699,516.6 700,516.8 701,516.9 702,517.0 703,517.2 704,517.3 705,517.5 706,517.7 707,517.9 708,518.1 709,518.3 710,518.4 711,518.6 712,518.8 713,519.0 714,519.2 715,519.4 716,519.5 717,519.7 718,519.8 719,519.9 720,520.0 721,520.1 722,520.2 723,520.3 724,520.3 725,520.3 726,520.3 727,520.3 728,520.3 729,520.2 730,520.2 731,520.1 732,520.0 733,519.9 734,519.8 735,519.6 736,519.5 737,519.3 738,519.2 739,519.0 740,518.8 741,518.6 742,518.5 743,518.3 744,518.1 745,517.9 746,517.7 747,517.6 748,517.4 749,517.2 750,517.1 751,516.9 752,516.8 753,516.7 754,516.6 755,516.5 756,516.5 757,516.4 758,516.4 759,516.3 760,516.3 761,516.3 762,516.4 763,516.4 764,516.5 765,516.5 766,516.6 767,516.7 768,516.7 769,516.8 770,516.9 771,517.0 772,517.1 773,517.2 774,517.3 775,517.4 776,517.5 777,517.5 778,517.6 779,517.7 780,517.7 781,517.8 782,517.8 783,517.9 784,517.9 785,518.0 786,518.0 787,518.0 788,518.1 789,518.1 790,518.2 791,518.2 792,518.3 793,518.3 794,518.4 795,518.4 796,518.4 797,518.5 798,518.5 799,518.5 800,518.5 801,518.5 802,518.5 803,518.5 804,518.4 805,518.4 806,518.3 807,518.2 808,518.2 809,518.1 810,518.0 811,517.8 812,517.7 813,517.6 814,517.5 815,517.4 816,517.3 817,517.2 818,517.1 819,517.0 820,516.9 821,516.9 822,516.8 823,516.8 824,516.8 825,516.8 826,516.8 827,516.9 828,516.9 829,517.0 830,517.1 831,517.2 832,517.3 833,517.4 834,517.6 835,517.7 836,517.9 837,518.1 838,518.3 839,518.5 840,518.7 841,518.9 842,519.1 843,519.3 844,519.5 845,519.7 846,519.8 847,520.0 848,520.2 849,520.4 850,520.5 851,520.7 852,520.8 853,520.9 854,521.0 855,521.1 856,521.2 857,521.2 858,521.3 859,521.3 860,521.3 861,521.3 862,521.3 863,521.2 864,521.2 865,521.1 866,521.0 867,520.9 868,520.8 869,520.7 870,520.5 871,520.4 872,520.2 873,520.1 874,519.9 875,519.8 876,519.6 877,519.5 878,519.3 879,519.2 880,519.0 881,518.9 882,518.8 883,518.7 884,518.5 885,518.5 886,518.4 887,518.3 888,518.3 889,518.2 890,518.2 891,518.2 892,518.3 893,518.3 894,518.4 895,518.4 896,518.5 897,518.6 898,518.7 899,518.9 900,519.0 901,519.2 902,519.3 903,519.5 904,519.7 905,519.9 906,520.1 907,520.3 908,520.5 909,520.7 910,520.9 911,521.1 912,521.3 913,521.5 914,521.7 915,521.8 916,522.0 917,522.2 918,522.3 919,522.4 920,522.6 921,522.7 922,522.7 923,522.8 924,522.9 925,522.9 926,522.9 927,522.9 928,522.9 929,522.8 930,522.8 931,522.7 932,522.6 933,522.5 934,522.4 935,522.3 936,522.2 937,522.0 938,521.9 939,521.7 940,521.6 941,521.4 942,521.3 943,521.1 944,521.0 945,520.8 946,520.7 947,520.5 948,520.4 949,520.3 950,520.2 951,520.1 952,520.0 953,519.9 954,519.8 955,519.8 956,519.7 957,519.7 958,519.7 959,519.7 960,519.7 961,519.8 962,519.9 963,519.9 964,520.0 965,520.1 966,520.3 967,520.4 968,520.5 969,520.7 970,520.8 971,521.0 972,521.2 973,521.4 974,521.5 975,521.7 976,521.9 977,522.1 978,522.2 979,522.4 980,522.5 981,522.7 982,522.8 983,522.9 984,523.1 985,523.2 986,523.2 987,523.3 988,523.3 989,523.4 990,523.4 991,523.4 992,523.4 993,523.3 994,523.3 995,523.2 996,523.1 997,523.0 998,522.9 999,522.8 1000,522.6 1001,522.5 1002,522.3 1003,522.2 1004,522.0 1005,521.8 1006,521.6 1007,521.4 1008,521.3 1009,521.1 1010,520.9 1011,520.7 1012,520.5 1013,520.4 1014,520.2 1015,520.1 1016,519.9" fill="none" stroke="#00b000" stroke-width="1" shape-rendering="crispEdges"/>
<polyline points="17,194.3 18,194.4 19,194.5 20,194.5 21,194.5 22,194.4 23,194.3 24,194.2 25,194.0 26,193.9 27,193.7 28,193.6 29,193.4 30,193.3 31,193.2 32,193.2 33,193.1 34,193.1 35,193.0 36,193.0 37,193.0 38,193.0 39,193.0 40,193.0 41,193.0 42,193.0 43,193.0 44,193.0 45,193.0 46,193.0 47,193.0 48,193.0 49,193.0 50,193.0 51,193.0 52,193.0 53,193.0 54,193.0 55,193.0 56,193.0 57,193.0 58,193.0 59,193.0 60,193.0 61,193.0 62,193.0 63,193.0 64,193.0 65,193.0 66,193.0 67,193.0 68,193.0 69,193.0 70,193.0 71,193.0 72,193.0 73,193.0 74,193.0 75,193.0 76,193.0 77,193.0 78,193.0 79,193.0 80,193.0 81,193.0 82,193.0 83,193.0 84,193.0 85,193.0 86,193.0 87,193.0 88,193.1 89,193.1 90,193.1 91,193.1 92,193.2 93,193.2 94,193.3 95,193.3 96,193.4 97,193.5 98,193.6 99,193.6 100,193.7 101,193.9 102,194.0 103,194.1 104,194.2 105,194.3 106,194.3 107,194.4 108,194.5 109,194.5 110,194.5 111,194.5 112,194.5 113,194.4 114,194.3 115,194.3 116,194.2 117,194.1 118,194.0 119,193.9 120,193.7 121,193.6 122,193.6 123,193.5 124,193.4 125,193.3 126,193.3 127,193.2 128,193.2 129,193.1 130,193.1 131,193.1 132,193.1 133,193.0 134,193.0 135,193.0 136,193.0 137,193.0 138,193.0 139,193.0 140,193.0 141,193.0 142,193.0 143,193.0 144,193.0 145,193.0 146,193.0 147,193.0 148,193.0 149,193.0 150,193.0 151,193.0 152,193.0 153,193.0 154,193.0 155,193.0 156,193.0 157,193.0 158,193.0 159,193.0 160,193.0 161,193.0 162,193.0 163,193.0 164,193.0 165,193.0 166,193.0 167,193.0 168,193.0 169,193.0 170,193.0 171,193.0 172,193.0 173,193.0 174,192.9 175,192.9 176,192.9 177,192.8 178,192.7 179,192.7 180,192.6 181,192.4 182,192.3 183,192.2 184,192.0 185,191.9 186,191.8 187,191.7 188,191.6 189,191.5 190,191.5 191,191.5 192,191.6 193,191.7 194,191.8 195,191.9 196,192.0 197,192.2 198,192.3 199,192.4 200,192.6 201,192.7 202,192.7 203,192.8 204,192.8 205,192.8 206,192.8 207,192.8 208,192.8 209,192.8 210,192.7 211,192.7 212,192.7 213,192.7 214,192.6 215,192.6 216,192.6 217,192.5 218,192.5 219,192.5 220,192.4 221,192.4 222,192.4 223,192.3 224,192.3 225,192.3 226,192.2 227,192.2 228,192.2 229,192.2 230,192.1 231,192.1 232,192.1 233,192.0 234,192.0 235,192.2 236,192.5 237,192.7 238,192.9 239,193.1 240,193.3 241,193.5 242,193.7 243,193.9 244,194.1 245,194.3 246,194.6 247,195.0 248,195.3 249,195.6 250,196.0 251,196.3 252,196.7 253,197.0 254,197.4 255,197.7 256,198.0 257,198.4 258,198.8 259,199.1 260,199.5 261,199.9 262,200.4 263,201.3 264,202.1 265,202.9 266,203.8 267,204.6 268,205.4 269,206.2 270,207.1 271,207.9 272,208.6 273,209.4 274,210.1 275,210.8 276,211.6 277,212.3 278,213.0 279,213.8 280,214.5 281,215.3 282,216.2 283,217.2 284,218.1 285,219.1 286,220.0 287,221.0 288,221.9 289,222.9 290,223.8 291,224.8 292,225.9 293,227.0 294,228.1 295,229.1 296,230.2 297,231.3 298,232.6 299,233.8 300,235.1" fill="none" stroke="#00c000" stroke-width="1" shape-rendering="crispEdges"/>
<polyline points="299,233.8 300,235.1 301,236.3 302,237.6 303,238.9 304,240.1 305,241.5 306,243.0 307,244.5 308,246.0 309,247.4 310,248.9 311,250.4 312,251.9 313,253.6 314,255.3 315,257.1 316,258.8 317,260.6 318,262.4 319,264.1 320,265.9 321,267.5 322,269.1 323,270.8 324,272.4 325,274.0 326,275.6 327,277.2 328,279.0 329,280.9 330,282.8 331,284.7 332,286.6 333,288.6 334,290.5 335,292.4 336,294.3 337,296.2 338,298.2 339,300.1 340,301.8 341,303.5 342,305.2 343,306.9 344,308.6 345,310.4 346,312.1 347,313.8 348,315.5 349,317.4 350,319.2 351,321.1 352,323.0 353,324.8 354,326.7 355,328.6 356,330.4 357,332.3 358,334.4 359,336.5 360,338.7 361,340.8 362,342.9 363,345.0 364,347.1 365,349.3 366,351.4 367,353.3 368,355.2 369,357.1 370,358.9 371,360.8 372,362.7 373,364.6 374,366.4 375,368.3 376,369.9 377,371.5 378,373.1 379,374.6 380,376.2 381,377.7 382,379.3 383,380.9 384,382.4 385,384.0 386,385.5 387,387.2 388,388.8 389,390.5 390,392.2 391,393.8 392,395.5 393,397.2 394,398.8 395,400.7 396,402.5 397,404.4 398,406.2 399,408.0 400,409.9 401,411.7 402,413.6 403,415.4 404,416.9 405,418.2 406,419.5 407,420.9 408,422.2 409,423.5 410,424.9 411,426.2 412,427.2 413,428.2 414,429.2 415,430.2 416,431.3 417,432.3 418,433.3 419,434.3 420,435.3 421,436.3 422,437.3 423,438.3 424,439.3 425,440.3 426,441.3 427,442.3 428,443.3 429,444.3 430,445.3 431,446.4 432,447.5 433,448.7 434,449.8 435,451.0 436,452.1 437,453.3 438,454.4 439,455.6 440,456.7 441,457.9 442,459.0 443,460.2 444,461.4 445,462.6 446,463.8 447,465.0 448,466.2 449,467.4 450,468.6 451,469.8 452,471.0 453,472.2 454,473.4 455,474.6 456,475.6 457,476.4 458,477.2 459,478.0 460,478.8 461,479.6 462,480.4 463,481.2 464,482.0 465,482.8 466,483.6 467,484.4 468,485.0 469,485.6 470,486.2 471,486.8 472,487.4 473,487.9 474,488.5 475,489.0 476,489.6 477,490.2 478,490.7 479,491.3 480,491.8 481,492.4 482,493.0 483,493.5 484,494.1 485,494.6 486,495.2 487,495.8 488,496.4 489,496.9 490,497.3 491,497.7 492,498.0 493,498.4 494,498.8 495,499.2 496,499.5 497,499.9 498,500.3 499,500.7 500,501.1 501,501.5 502,501.9 503,502.3 504,502.8 505,503.2 506,503.6 507,504.0 508,504.4 509,504.8 510,505.2 511,505.6 512,506.1 513,506.5 514,506.9 515,507.3 516,507.7 517,508.1 518,508.5 519,508.9 520,509.2 521,509.6 522,509.9 523,510.3 524,510.6 525,510.9 526,511.2 527,511.5 528,511.8 529,512.1 530,512.3 531,512.6 532,512.9 533,513.2 534,513.5 535,513.8 536,514.1 537,514.4 538,514.7 539,514.9 540,515.2 541,515.5 542,515.8 543,516.0 544,516.3 545,516.4 546,516.3 547,516.3 548,516.2 549,516.2 550,516.1 551,516.1 552,516.1 553,516.0 554,516.0 555,515.9 556,515.9 557,515.9 558,515.9 559,515.8 560,515.8 561,515.8 562,515.8 563,515.8 564,515.8 565,515.8 566,515.8 567,515.9 568,515.9 569,515.9 570,516.0 571,516.0 572,516.1 573,516.1 574,516.2 575,516.3 576,516.3 577,516.4 578,516.5 579,516.6 580,516.7 581,516.8 582,516.9 583,517.0 584,517.1 585,517.2 586,517.3 587,517.4 588,517.4 589,517.5 590,517.6 591,517.7 592,517.8 593,517.9 594,518.0 595,518.1 596,518.2 597,518.3 598,518.3 599,518.4 600,518.5 601,518.6 602,518.7 603,518.8 604,518.8 605,518.9 606,519.0 607,519.0 608,519.1 609,519.1 610,519.2 611,519.2 612,519.2 613,519.3 614,519.3 615,519.3 616,519.3 617,519.3 618,519.3 619,519.3 620,519.3 621,519.2 622,519.2 623,519.1 624,519.1 625,519.0 626,519.0 627,518.9 628,518.8 629,518.7 630,518.6 631,518.6 632,518.5 633,518.4 634,518.3 635,518.1 636,518.0 637,517.9 638,517.8 639,517.7 640,517.6 641,517.4 642,517.3 643,517.2 644,517.1 645,517.0 646,516.8 647,516.7 648,516.6 649,516.5 650,516.4 651,516.3 652,516.2 653,516.1 654,516.0 655,515.9 656,515.8 657,515.8 658,515.7 659,515.6 660,515.6 661,515.5 662,515.5 663,515.4 664,515.4 665,515.4 666,515.4 667,515.4 668,515.4 669,515.5 670,515.5 671,515.6 672,515.6 673,515.7 674,515.8 675,516.0 676,516.1 677,516.3 678,516.5 679,516.7 680,516.9 681,517.2 682,517.4 683,517.7 684,518.0 685,518.2 686,518.5 687,518.7 688,518.9 689,519.1 690,519.3 691,519.4 692,519.5 693,519.6 694,519.7 695,519.7 696,519.7 697,519.8 698,519.8 699,519.8 700,519.8 701,519.8 702,519.8 703,519.8 704,519.8 705,519.8 706,519.9 707,519.9 708,520.0 709,520.0 710,520.1 711,520.1 712,520.2 713,520.2 714,520.3 715,520.3 716,520.3 717,520.4 718,520.4 719,520.4 720,520.4 721,520.4 722,520.4 723,520.4 724,520.4 725,520.3 726,520.3 727,520.2 728,520.2 729,520.1 730,520.1 731,520.0 732,519.9 733,519.8 734,519.7 735,519.6 736,519.5 737,519.4 738,519.3 739,519.2 740,519.1 741,519.0 742,518.9 743,518.8 744,518.6 745,518.5 746,518.4 747,518.3 748,518.2 749,518.1 750,518.0 751,517.9 752,517.8 753,517.7 754,517.6 755,517.5 756,517.4 757,517.3 758,517.3 759,517.2 760,517.1 761,517.1 762,517.0 763,517.0 764,516.9 765,516.9 766,516.9 767,516.9 768,516.9 769,516.9 770,516.9 771,516.9 772,516.9 773,516.9 774,517.0 775,517.0 776,517.1 777,517.1 778,517.2 779,517.2 780,517.3 781,517.4 782,517.5 783,517.6 784,517.7 785,517.8 786,517.8 787,517.9 788,518.1 789,518.2 790,518.3 791,518.4 792,518.5 793,518.6 794,518.7 795,518.8 796,518.9 797,519.0 798,519.1 799,519.2 800,519.3 801,519.4 802,519.5 803,519.6 804,519.7 805,519.8 806,519.9 807,520.0 808,520.0 809,520.1 810,520.2 811,520.2 812,520.3 813,520.3 814,520.3 815,520.4 816,520.4 817,520.4 818,520.4 819,520.4 820,520.4 821,520.4 822,520.4 823,520.4 824,520.4 825,520.3 826,520.3 827,520.2 828,520.2 829,520.2 830,520.1 831,520.0 832,520.0 833,519.9 834,519.8 835,519.8 836,519.7 837,519.6 838,519.5 839,519.5 840,519.4 841,519.3 842,519.2 843,519.1 844,519.1 845,519.0 846,518.9 847,518.8 848,518.8 849,518.7 850,518.6 851,518.6 852,518.5 853,518.5 854,518.4 855,518.4 856,518.3 857,518.3 858,518.3 859,518.3 860,518.2 861,518.2 862,518.2 863,518.2 864,518.3 865,518.3 866,518.3 867,518.3 868,518.4 869,518.4 870,518.4 871,518.5 872,518.6 873,518.6 874,518.7 875,518.8 876,518.8 877,518.9 878,519.0 879,519.1 880,519.2 881,519.3 882,519.4 883,519.5 884,519.6 885,519.7 886,519.8 887,519.9 888,520.0 889,520.1 890,520.3 891,520.4 892,520.5 893,520.6 894,520.7 895,520.8 896,520.9 897,521.0 898,521.1 899,521.1 900,521.2 901,521.3 902,521.4 903,521.4 904,521.5 905,521.5 906,521.6 907,521.6 908,521.7 909,521.7 910,521.7 911,521.7 912,521.7 913,521.7 914,521.7 915,521.7 916,521.7 917,521.7 918,521.7 919,521.7 920,521.6 921,521.6 922,521.6 923,521.5 924,521.5 925,521.4 926,521.3 927,521.3 928,521.2 929,521.1 930,521.0 931,521.0 932,520.9 933,520.8 934,520.7 935,520.6 936,520.5 937,520.4 938,520.3 939,520.2 940,520.1 941,520.0 942,519.9 943,519.8 944,519.8 945,519.7 946,519.6 947,519.5 948,519.5 949,519.4 950,519.3 951,519.3 952,519.2 953,519.2 954,519.1 955,519.1 956,519.0 957,519.0 958,518.9 959,518.9 960,518.9 961,518.9 962,518.9 963,518.9 964,518.9 965,519.0 966,519.0 967,519.0 968,519.1 969,519.1 970,519.2 971,519.3 972,519.3 973,519.4 974,519.5 975,519.6 976,519.7 977,519.8 978,519.9 979,520.0 980,520.2 981,520.3 982,520.4 983,520.5 984,520.7 985,520.8 986,520.9 987,521.1 988,521.2 989,521.4 990,521.5 991,521.6 992,521.8 993,521.9 994,522.0 995,522.1 996,522.3 997,522.4 998,522.5 999,522.6 1000,522.7 1001,522.8 1002,522.9 1003,523.0 1004,523.1 1005,523.2 1006,523.2 1007,523.3 1008,523.4 1009,523.4 1010,523.5 1011,523.5 1012,523.5 1013,523.5 1014,523.5 1015,523.6 1016,523.6" fill="none" stroke="#00d000" stroke-width="1" shape-rendering="crispEdges"/>
<polyline points="480,493.4 481,493.9 482,494.5 483,495.1 484,495.7 485,496.2 486,496.8 487,497.4 488,498.0 489,498.6 490,499.1 491,499.7 492,500.3 493,500.9 494,501.4 495,502.0 496,502.6 497,503.1 498,503.7 499,504.2 500,504.7 501,505.2 502,505.8 503,506.3 504,506.7 505,507.2 506,507.7 507,508.2 508,508.6 509,509.0 510,509.5 511,509.9 512,510.3 513,510.7 514,511.1 515,511.4 516,511.8 517,512.1 518,512.4 519,512.7 520,513.0 521,513.2 522,513.5 523,513.7 524,513.9 525,514.1 526,514.3 527,514.5 528,514.7 529,514.9 530,515.1 531,515.3 532,515.5 533,515.7 534,515.8 535,516.0 536,516.2 537,516.3 538,516.5 539,516.6 540,516.8 541,516.9 542,517.0 543,517.0 544,516.8 545,516.6 546,516.4 547,516.2 548,516.3 549,516.3 550,516.3 551,516.4 552,516.4 553,516.5 554,516.5 555,516.6 556,516.6 557,516.7 558,516.7 559,516.8" fill="none" stroke="#00ff00" stroke-width="1" shape-rendering="crispEdges"/>
<polyline points="236,192.4 237,192.6 238,192.9 239,193.1 240,193.3 241,193.5 242,193.8 243,194.0 244,194.4 245,194.7 246,195.1 247,195.5 248,195.8 249,196.2 250,196.6 251,196.9 252,197.3 253,197.7 254,198.0 255,198.4 256,198.8 257,199.1 258,199.5 259,199.9 260,200.4 261,201.3 262,202.1 263,202.9 264,203.8 265,204.6 266,205.4 267,206.2 268,207.1 269,207.9 270,208.6 271,209.4 272,210.1 273,210.8 274,211.6 275,212.3 276,213.0 277,213.8 278,214.5 279,215.3 280,216.2 281,217.2 282,218.1 283,219.1 284,220.0 285,221.0 286,221.9 287,222.9 288,223.8 289,224.8 290,225.9 291,227.0 292,228.1 293,229.1 294,230.2 295,231.3 296,232.6 297,233.8 298,235.1 299,236.3 300,237.6 301,238.9 302,240.1 303,241.5 304,243.0 305,244.5 306,246.0 307,247.4 308,248.9 309,250.4 310,251.9 311,253.6 312,255.3 313,257.1 314,258.8 315,260.6 316,262.4 317,264.1 318,265.9 319,267.5 320,269.1 321,270.8 322,272.4 323,274.0 324,275.6 325,277.2 326,279.0 327,280.9 328,282.8 329,284.7 330,286.6 331,288.6" fill="none" stroke="#00ff00" stroke-width="2" shape-rendering="crispEdges"/>
<polyline points="331,288.6 332,290.5 333,292.4 334,294.3 335,296.2 336,298.2 337,300.1 338,301.8 339,303.5 340,305.2 341,306.9 342,308.6 343,310.4 344,312.1 345,313.8 346,315.5 347,317.4 348,319.2 349,321.1 350,323.0 351,324.8 352,326.7 353,328.6 354,330.4 355,332.3 356,334.4 357,336.5 358,338.7 359,340.8 360,342.9 361,345.0 362,347.1 363,349.3 364,351.4 365,353.3 366,355.2 367,357.1 368,358.9 369,360.8 370,362.7 371,364.6 372,366.4 373,368.3 374,369.9 375,371.5 376,373.1 377,374.6 378,376.2 379,377.7 380,379.3 381,380.9 382,382.4 383,384.0 384,385.5 385,387.2 386,388.8 387,390.5 388,392.2 389,393.8 390,395.5 391,397.2 392,398.8 393,400.7 394,402.5 395,404.4 396,406.2 397,408.0 398,409.9 399,411.7 400,413.6 401,415.4 402,416.9 403,418.2 404,419.5 405,420.9 406,422.2 407,423.5 408,424.9 409,426.2 410,427.2 411,428.2 412,429.2 413,430.2 414,431.3 415,432.3 416,433.3 417,434.3 418,435.3 419,436.3 420,437.3 421,438.3" fill="none" stroke="#00ff00" stroke-width="2" shape-rendering="crispEdges"/>
<polyline points="421,438.3 422,439.3 423,440.3 424,441.3 425,442.3 426,443.3 427,444.3 428,445.3 429,446.4 430,447.5 431,448.7 432,449.8 433,451.0 434,452.1 435,453.3 436,454.4 437,455.6 438,456.7 439,457.9 440,459.0 441,460.2 442,461.4 443,462.6 444,463.8 445,465.0 446,466.2 447,467.4 448,468.6 449,469.8 450,471.0 451,472.2 452,473.4 453,474.6 454,475.6 455,476.4 456,477.2 457,478.0 458,478.8 459,479.6 460,480.4 461,481.2 462,482.0 463,482.8 464,483.6 465,484.4 466,485.0 467,485.6 468,486.2 469,486.8 470,487.4 471,488.0 472,488.6 473,489.2 474,489.8 475,490.4 476,491.0 477,491.6 478,492.2 479,492.8 480,493.4 481,493.9 482,494.5 483,495.1 484,495.7 485,496.2 486,496.8 487,497.4 488,497.7 489,498.1 490,498.4 491,498.8 492,499.1 493,499.5 494,499.8 495,500.2 496,500.5 497,500.9 498,501.2 499,501.6 500,501.9 501,502.2 502,502.6 503,502.9 504,503.2 505,503.6 506,503.9 507,504.3 508,504.6 509,504.9 510,505.3 511,505.6 512,505.9 513,506.3 514,506.6 515,507.0 516,507.3 517,507.6 518,507.9 519,508.2 520,508.5 521,508.8 522,509.1 523,509.4 524,509.7 525,510.0 526,510.3 527,510.6 528,510.9 529,511.2 530,511.6 531,511.9 532,512.3 533,512.6 534,513.0 535,513.4 536,513.7 537,514.1 538,514.4 539,514.8 540,515.1 541,515.5 542,515.9 543,516.0 544,516.1 545,516.1 546,516.2 547,516.2" fill="none" stroke="#00ff00" stroke-width="2" shape-rendering="crispEdges"/>
<circle cx="250" cy="90.5" r="6" fill="#f8a400" shape-rendering="geometricPrecision"/>
<text x="250" y="94.5" font-family='"Liberation Sans", sans-serif' font-size="11.5" font-weight="700" text-anchor="middle" fill="#000">a</text>
<circle cx="477" cy="90.5" r="6" fill="#f8a400" shape-rendering="geometricPrecision"/>
<text x="477" y="94.5" font-family='"Liberation Sans", sans-serif' font-size="11.5" font-weight="700" text-anchor="middle" fill="#000">b</text>
<polygon points="341,38 351.5,38 346.2,48" fill="#f8a400"/>
<polygon points="996,317.2 1004,312 1004,322.5" fill="#00ff00"/>
<rect x="1004" y="316" width="15" height="2" fill="#00ff00"/>
<rect x="19" y="195" width="5" height="2" fill="#00ff00"/>
<polygon points="23.4,192.6 30.2,197.2 23.4,202.2" fill="#00ff00" shape-rendering="geometricPrecision"/>
<circle cx="10.5" cy="197.1" r="8.85" fill="#00ff00" stroke="#f8a000" stroke-width="1.9" shape-rendering="geometricPrecision"/>
<text x="10.3" y="201.4" font-family='"Liberation Sans", sans-serif' font-size="12" text-anchor="middle" fill="#000">4</text>
</svg>
<div class="a" style="left:208.5px;top:381.2px;font-size:15.5px;line-height:15.5px;font-weight:700;letter-spacing:-0.044px;color:#fff;">read write not OK</div>
<div class="a" style="left:313.40px;top:351.50px;font-size:12.4px;line-height:12.4px;font-weight:400;color:#e8e8e8;transform:scaleX(0.82);transform-origin:0 0;">CS</div>
<div class="a" style="left:35.60px;top:150.15px;font-size:14px;line-height:14px;font-weight:400;color:#fff;transform:scaleX(0.7);transform-origin:0 0;-webkit-font-smoothing:antialiased;">SDO</div>
<div class="a" style="left:35.60px;top:152.65px;font-size:14px;line-height:14px;font-weight:400;color:#fff;transform:scaleX(0.7);transform-origin:0 0;-webkit-font-smoothing:antialiased;">SDO</div>
<div class="a" style="left:35.60px;top:155.35px;font-size:14px;line-height:14px;font-weight:400;color:#fff;transform:scaleX(0.7);transform-origin:0 0;-webkit-font-smoothing:antialiased;">SCK</div>
<div class="a" style="left:7.39px;top:13.07px;font-size:11.5px;line-height:11.5px;font-weight:400;color:#fff;-webkit-text-stroke:0.15px #fff;">File</div>
<div class="a" style="left:40.20px;top:13.07px;font-size:11.5px;line-height:11.5px;font-weight:400;color:#fff;-webkit-text-stroke:0.15px #fff;">Edit</div>
<div class="a" style="left:76.19px;top:13.07px;font-size:11.5px;line-height:11.5px;font-weight:400;color:#fff;-webkit-text-stroke:0.15px #fff;">Vertical</div>
<div class="a" style="left:128.19px;top:13.07px;font-size:11.5px;line-height:11.5px;font-weight:400;color:#fff;-webkit-text-stroke:0.15px #fff;">Horiz/Acq</div>
<div class="a" style="left:192.19px;top:12.37px;font-size:11.5px;line-height:11.5px;font-weight:400;color:#fff;-webkit-text-stroke:0.15px #fff;">Trig</div>
<div class="a" style="left:226.19px;top:13.07px;font-size:11.5px;line-height:11.5px;font-weight:400;color:#fff;-webkit-text-stroke:0.15px #fff;">Display</div>
<div class="a" style="left:278.19px;top:13.07px;font-size:11.5px;line-height:11.5px;font-weight:400;color:#fff;-webkit-text-stroke:0.15px #fff;">Cursors</div>
<div class="a" style="left:334.69px;top:13.07px;font-size:11.5px;line-height:11.5px;font-weight:400;color:#fff;-webkit-text-stroke:0.15px #fff;">Measure</div>
<div class="a" style="left:393.19px;top:13.07px;font-size:11.5px;line-height:11.5px;font-weight:400;color:#fff;-webkit-text-stroke:0.15px #fff;">Mask</div>
<div class="a" style="left:435.50px;top:13.07px;font-size:11.5px;line-height:11.5px;font-weight:400;color:#fff;-webkit-text-stroke:0.15px #fff;">Math</div>
<div class="a" style="left:475.39px;top:13.07px;font-size:11.5px;line-height:11.5px;font-weight:400;color:#fff;-webkit-text-stroke:0.15px #fff;">MyScope</div>
<div class="a" style="left:537.20px;top:13.07px;font-size:11.5px;line-height:11.5px;font-weight:400;color:#fff;-webkit-text-stroke:0.15px #fff;">Analyze</div>
<div class="a" style="left:591.20px;top:13.07px;font-size:11.5px;line-height:11.5px;font-weight:400;color:#fff;-webkit-text-stroke:0.15px #fff;">Utilities</div>
<div class="a" style="left:643.20px;top:13.07px;font-size:11.5px;line-height:11.5px;font-weight:400;color:#fff;-webkit-text-stroke:0.15px #fff;">Help</div>
<div class="a" style="left:33px;top:5px;width:1px;height:26px;background:#5a64a4"></div>
<div class="a" style="left:68px;top:5px;width:1px;height:26px;background:#5a64a4"></div>
<div class="a" style="left:120px;top:5px;width:1px;height:26px;background:#5a64a4"></div>
<div class="a" style="left:184px;top:5px;width:1px;height:26px;background:#5a64a4"></div>
<div class="a" style="left:219px;top:5px;width:1px;height:26px;background:#5a64a4"></div>
<div class="a" style="left:271px;top:5px;width:1px;height:26px;background:#5a64a4"></div>
<div class="a" style="left:326px;top:5px;width:1px;height:26px;background:#5a64a4"></div>
<div class="a" style="left:385px;top:5px;width:1px;height:26px;background:#5a64a4"></div>
<div class="a" style="left:427px;top:5px;width:1px;height:26px;background:#5a64a4"></div>
<div class="a" style="left:467px;top:5px;width:1px;height:26px;background:#5a64a4"></div>
<div class="a" style="left:529px;top:5px;width:1px;height:26px;background:#5a64a4"></div>
<div class="a" style="left:584px;top:5px;width:1px;height:26px;background:#5a64a4"></div>
<div class="a" style="left:635px;top:5px;width:1px;height:26px;background:#5a64a4"></div>
<div class="a" style="left:674px;top:5px;width:1px;height:26px;background:#5a64a4"></div>
<div class="a" style="left:677px;top:6px;width:25px;height:25px;border-radius:4px;background:linear-gradient(#c4dcff 0%,#8ec4ff 40%,#5a90c8 75%,#3c6890 100%)"></div>
<svg class="a" style="left:677px;top:6px" width="25" height="25"><polygon points="9,10 16.5,10 12.75,17" fill="#0a0a60"/></svg>
<div class="a" style="left:703px;top:2px;width:1px;height:32px;background:#7078b8"></div>
<div class="a" style="left:745px;top:2px;width:1px;height:32px;background:#7078b8"></div>
<div class="a" style="left:929px;top:2px;width:1px;height:32px;background:#7078b8"></div>
<div class="a" style="left:981px;top:2px;width:1px;height:32px;background:#7078b8"></div>
<div class="a" style="left:804.69px;top:11.70px;font-size:13px;line-height:13px;font-weight:400;color:#171d6a;">DPO70804C</div>
<div class="a" style="left:893.35px;top:11.93px;font-size:16.5px;line-height:16.5px;font-weight:700;color:#b0a080;">Tek</div>
<div class="a" style="left:891.35px;top:9.93px;font-size:16.5px;line-height:16.5px;font-weight:700;color:#fff;">Tek</div>
<div class="a" style="left:942px;top:6px;width:25px;height:25px;border-radius:4px;background:linear-gradient(#a8ccff 0%,#4a98f8 50%,#2a70d0 75%,#1e4a88 100%)"></div>
<div class="a" style="left:949px;top:21px;width:11px;height:2px;background:#fff"></div>
<div class="a" style="left:983px;top:6px;width:25px;height:25px;border-radius:4px;background:linear-gradient(#ffe0d0 0%,#ff5020 35%,#e01800 65%,#500000 100%)"></div>
<div class="a" style="left:989.50px;top:11.73px;font-size:14.5px;line-height:14.5px;font-weight:700;color:#fff;">X</div>
<div class="a" style="left:17px;top:571px;width:1000px;height:98px;background:#000;border-top:1px solid #1c2440"></div>
<div style="position:absolute;border:1px solid #c4c4c4;border-radius:6px;left:21px;top:574px;width:281px;height:24px"></div>
<div style="position:absolute;border:1px solid #c4c4c4;border-radius:6px;left:306px;top:574px;width:136px;height:93px"></div>
<div style="position:absolute;border:1px solid #c4c4c4;border-radius:6px;left:591px;top:574px;width:186px;height:26px"></div>
<div style="position:absolute;border:1px solid #c4c4c4;border-radius:6px;left:782px;top:574px;width:230px;height:93px"></div>
<div class="a" style="left:29.5px;top:581px;width:33.5px;height:14px;border-radius:7.0px;background:linear-gradient(#e0dce0 0%,#a0a0a0 35%,#505050 75%,#202020 100%);"></div><div class="a" style="left:31.1px;top:583.2px;width:30.3px;height:11.3px;border-radius:5.65px;background:linear-gradient(#00f000 0%,#10d810 55%,#209820 100%);"></div><div class="a" style="left:29.5px;top:582px;width:33.5px;height:14px;line-height:14px;text-align:center;font-size:9.5px;font-weight:700;color:#000;letter-spacing:-0.3px">C4</div>
<div class="a" style="left:67.4px;top:581.0px;font-size:12.5px;line-height:12.5px;font-weight:400;letter-spacing:0.03px;color:#fff;-webkit-text-stroke:0.3px #fff;">500.0mV/div</div>
<div class="a" style="left:182.5px;top:581.6px;font-size:12.5px;line-height:12.5px;font-weight:400;letter-spacing:-0.1px;color:#fff;-webkit-text-stroke:0.3px #fff;">50Ω</div>
<div class="a" style="left:214.47px;top:579.95px;font-size:7.5px;line-height:7.5px;font-weight:700;color:#fff;">B</div>
<div class="a" style="left:221.37px;top:579.38px;font-size:9px;line-height:9px;font-weight:700;color:#fff;">′</div>
<div class="a" style="left:219.60px;top:585.93px;font-size:10px;line-height:10px;font-weight:400;color:#fff;-webkit-text-stroke:0.3px #fff;">W</div>
<div class="a" style="left:229.1px;top:581.6px;font-size:12.5px;line-height:12.5px;font-weight:400;letter-spacing:-0.075px;color:#fff;-webkit-text-stroke:0.3px #fff;">:6.0G</div>
<div class="a" style="left:352px;top:580px;width:86px;height:22px;border:1px solid #c4c4c4"></div>
<div class="a" style="left:314px;top:582px;width:36.5px;height:15px;border-radius:7.5px;background:linear-gradient(#e0dce0 0%,#a0a0a0 35%,#505050 75%,#202020 100%);"></div><div class="a" style="left:315.6px;top:584.2px;width:33.3px;height:12.3px;border-radius:6.15px;background:linear-gradient(#00f000 0%,#10d810 55%,#209820 100%);"></div><div class="a" style="left:314px;top:583px;width:36.5px;height:15px;line-height:15px;text-align:center;font-size:9px;font-weight:700;color:#000;letter-spacing:-0.3px">t1</div>
<div class="a" style="left:354.3px;top:584.0px;font-size:12.5px;line-height:12.5px;font-weight:400;letter-spacing:0.04px;color:#fff;-webkit-text-stroke:0.3px #fff;">-348ps</div>
<div class="a" style="left:352px;top:601px;width:86px;height:22px;border:1px solid #c4c4c4"></div>
<div class="a" style="left:314px;top:603px;width:36.5px;height:15px;border-radius:7.5px;background:linear-gradient(#e0dce0 0%,#a0a0a0 35%,#505050 75%,#202020 100%);"></div><div class="a" style="left:315.6px;top:605.2px;width:33.3px;height:12.3px;border-radius:6.15px;background:linear-gradient(#00f000 0%,#10d810 55%,#209820 100%);"></div><div class="a" style="left:314px;top:604px;width:36.5px;height:15px;line-height:15px;text-align:center;font-size:9px;font-weight:700;color:#000;letter-spacing:-0.3px">t2</div>
<div class="a" style="left:354.3px;top:605.0px;font-size:12.5px;line-height:12.5px;font-weight:400;letter-spacing:0.025px;color:#fff;-webkit-text-stroke:0.3px #fff;">564ps</div>
<div class="a" style="left:352px;top:622px;width:86px;height:22px;border:1px solid #c4c4c4"></div>
<div class="a" style="left:314px;top:624px;width:36.5px;height:15px;border-radius:7.5px;background:linear-gradient(#e0dce0 0%,#a0a0a0 35%,#505050 75%,#202020 100%);"></div><div class="a" style="left:315.6px;top:626.2px;width:33.3px;height:12.3px;border-radius:6.15px;background:linear-gradient(#00f000 0%,#10d810 55%,#209820 100%);"></div><div class="a" style="left:314px;top:625px;width:36.5px;height:15px;line-height:15px;text-align:center;font-size:9px;font-weight:700;color:#000;letter-spacing:-0.3px">Δt</div>
<div class="a" style="left:354.3px;top:626.0px;font-size:12.5px;line-height:12.5px;font-weight:400;letter-spacing:0.025px;color:#fff;-webkit-text-stroke:0.3px #fff;">912ps</div>
<div class="a" style="left:352px;top:643px;width:86px;height:22px;border:1px solid #c4c4c4"></div>
<div class="a" style="left:314px;top:645px;width:36.5px;height:15px;border-radius:7.5px;background:linear-gradient(#e0dce0 0%,#a0a0a0 35%,#505050 75%,#202020 100%);"></div><div class="a" style="left:315.6px;top:647.2px;width:33.3px;height:12.3px;border-radius:6.15px;background:linear-gradient(#00f000 0%,#10d810 55%,#209820 100%);"></div><div class="a" style="left:314px;top:646px;width:36.5px;height:15px;line-height:15px;text-align:center;font-size:9px;font-weight:700;color:#000;letter-spacing:-0.3px">1/Δt</div>
<div class="a" style="left:353.7px;top:647.0px;font-size:12.5px;line-height:12.5px;font-weight:400;letter-spacing:-0.071px;color:#fff;-webkit-text-stroke:0.3px #fff;">1.096GHz</div>
<div class="a" style="left:597px;top:581px;width:16px;height:15px;background:#d0d0d0;border:1.5px solid #f09000"></div>
<div class="a" style="left:597.70px;top:583.77px;font-size:11.5px;line-height:11.5px;font-weight:700;color:#000;">A'</div>
<div class="a" style="left:614.5px;top:581px;width:33.5px;height:14px;border-radius:7.0px;background:linear-gradient(#e0dce0 0%,#a0a0a0 35%,#505050 75%,#202020 100%);"></div><div class="a" style="left:616.1px;top:583.2px;width:30.3px;height:11.3px;border-radius:5.65px;background:linear-gradient(#00f000 0%,#10d810 55%,#209820 100%);"></div><div class="a" style="left:614.5px;top:582px;width:33.5px;height:14px;line-height:14px;text-align:center;font-size:9.5px;font-weight:700;color:#000;letter-spacing:-0.3px">C4</div>
<svg class="a" style="left:650px;top:580px" width="16" height="16"><polyline points="1,2 5,2 11,13 15,13" fill="none" stroke="#fff" stroke-width="1.5"/></svg>
<div class="a" style="left:667.0px;top:581.7px;font-size:12.5px;line-height:12.5px;font-weight:400;letter-spacing:-0.2px;color:#fff;-webkit-text-stroke:0.3px #fff;">-1.14V</div>
<div class="a" style="left:789.4px;top:580.7px;font-size:12.5px;line-height:12.5px;font-weight:400;letter-spacing:0.12px;color:#fff;-webkit-text-stroke:0.3px #fff;">400.0ps/div</div>
<div class="a" style="left:879.5px;top:580.7px;font-size:12.5px;line-height:12.5px;font-weight:400;letter-spacing:-0.157px;color:#fff;-webkit-text-stroke:0.3px #fff;">25.0GS/s</div>
<div class="a" style="left:939.0px;top:580.7px;font-size:12.5px;line-height:12.5px;font-weight:400;letter-spacing:1.0px;color:#fff;-webkit-text-stroke:0.3px #fff;">IT</div>
<div class="a" style="left:964.0px;top:580.7px;font-size:12.5px;line-height:12.5px;font-weight:400;letter-spacing:-0.08px;color:#fff;-webkit-text-stroke:0.3px #fff;">4.0ps/</div>
<div class="a" style="left:788.9px;top:602.0px;font-size:12px;line-height:12px;font-weight:700;letter-spacing:0.133px;color:#ff1010;">Stopped</div>
<svg class="a" style="left:988px;top:600px" width="14" height="20"><rect x="5.5" y="2" width="3" height="12" fill="#f0e000"/><circle cx="7" cy="15" r="3" fill="#f0e000"/></svg>
<div class="a" style="left:789.4px;top:622.5px;font-size:12.5px;line-height:12.5px;font-weight:400;letter-spacing:0.06px;color:#fff;-webkit-text-stroke:0.3px #fff;">5 acqs</div>
<div class="a" style="left:928.2px;top:622.5px;font-size:12.5px;line-height:12.5px;font-weight:400;letter-spacing:0.383px;color:#fff;-webkit-text-stroke:0.3px #fff;">RL:1.0k</div>
<div class="a" style="left:789.4px;top:644.0px;font-size:12.5px;line-height:12.5px;font-weight:400;letter-spacing:0.2px;color:#fff;-webkit-text-stroke:0.3px #fff;">Auto</div>
<div class="a" style="left:830.7px;top:644.0px;font-size:12.5px;line-height:12.5px;font-weight:400;letter-spacing:0.119px;color:#fff;-webkit-text-stroke:0.3px #fff;">November 11, 2019</div>
<div class="a" style="left:955.6px;top:644.0px;font-size:12.5px;line-height:12.5px;font-weight:400;letter-spacing:0.0px;color:#f8a000;-webkit-text-stroke:0.3px #f8a000;">18:22:10</div>
<div class="a" style="left:13px;top:680px;width:1007px;height:80px;border:1px solid #fff"></div>
<div class="a" style="left:30px;top:684px;width:960px;height:74px;border-radius:8px;background:linear-gradient(90deg,#a6bae8 0%,#98b0e2 40%,#7a92d2 75%,#6a84c8 100%)"></div>
<div class="a" style="left:30px;top:684px;width:135px;height:22px;border-top-left-radius:8px;background:#b8c8ee;border-right:1px solid #fff;border-bottom:1px solid #fff"></div>
<div class="a" style="left:38.6px;top:689.0px;font-size:14.8px;line-height:14.8px;font-weight:700;letter-spacing:0.014px;color:#06067a;">Cursor Controls</div>
<div class="a" style="left:246.5px;top:691.3px;font-size:12.2px;line-height:12.2px;font-weight:700;letter-spacing:0.46px;color:#101020;">Source</div>
<div class="a" style="left:163.6px;top:710.8px;font-size:13.4px;line-height:13.4px;font-weight:700;letter-spacing:0.029px;color:#101020;">Cursor 1</div>
<div class="a" style="left:315.8px;top:710.8px;font-size:13.4px;line-height:13.4px;font-weight:700;letter-spacing:0.143px;color:#101020;">Cursor 2</div>
<div class="a" style="left:139px;top:727px;width:105px;height:22px;background:#fff;border:1px solid #60a0ff"></div>
<div class="a" style="left:221px;top:728px;width:22px;height:20px;background:#c0dcff;border-left:1px solid #60a0ff"></div>
<svg class="a" style="left:221px;top:728px" width="22" height="20"><polygon points="6.5,5 15,5 10.75,12.5" fill="#000"/></svg>
<div class="a" style="left:141.6px;top:730.1px;font-size:13px;line-height:13px;font-weight:400;letter-spacing:0.567px;color:#000;">Ch 4</div>
<div class="a" style="left:291.7px;top:727px;width:105px;height:22px;background:#fff;border:1px solid #60a0ff"></div>
<div class="a" style="left:373.7px;top:728px;width:22px;height:20px;background:#c0dcff;border-left:1px solid #60a0ff"></div>
<svg class="a" style="left:373.7px;top:728px" width="22" height="20"><polygon points="6.5,5 15,5 10.75,12.5" fill="#000"/></svg>
<div class="a" style="left:294.0px;top:730.1px;font-size:13px;line-height:13px;font-weight:400;letter-spacing:0.567px;color:#000;">Ch 4</div>
<div class="a" style="left:412px;top:692px;width:1px;height:59px;background:#fff"></div>
<div class="a" style="left:775px;top:692px;width:1px;height:59px;background:#fff"></div>
<div class="a" style="left:887px;top:692px;width:1px;height:59px;background:#fff"></div>
<div class="a" style="left:572.7px;top:691.1px;font-size:12.5px;line-height:12.5px;font-weight:700;letter-spacing:0.31px;color:#101020;">Cursor Type</div>
<div class="a" style="left:454.4px;top:712.3px;font-size:12px;line-height:12px;font-weight:700;letter-spacing:0.32px;color:#101020;">H Bars</div>
<div class="a" style="left:535.2px;top:712.3px;font-size:12px;line-height:12px;font-weight:700;letter-spacing:-0.08px;color:#101020;">V Bars</div>
<div class="a" style="left:606.2px;top:712.6px;font-size:12px;line-height:12px;font-weight:700;letter-spacing:0.114px;color:#101020;">Waveform</div>
<div class="a" style="left:694.6px;top:712.6px;font-size:12px;line-height:12px;font-weight:700;letter-spacing:-0.08px;color:#101020;">Screen</div>
<div class="a" style="left:447.5px;top:726.5px;width:54px;height:26.5px;border-radius:13.25px;background:linear-gradient(#c8e4ff 0%,#90c4ff 45%,#6aa0e0 75%,#4a78b8 100%);border:1.5px solid #1a2890"></div>
<div class="a" style="left:527.8px;top:726.5px;width:53.5px;height:26.5px;border-radius:13.25px;background:linear-gradient(#c86800 0%,#f09010 50%,#ffb840 100%);border:1.5px solid #3a2a10"></div>
<div class="a" style="left:607.8px;top:726.5px;width:53.7px;height:26px;border-radius:13.0px;background:linear-gradient(#c8e4ff 0%,#90c4ff 45%,#6aa0e0 75%,#4a78b8 100%);border:1.5px solid #1a2890"></div>
<div class="a" style="left:687.8px;top:726.5px;width:53.7px;height:26px;border-radius:13.0px;background:linear-gradient(#c8e4ff 0%,#90c4ff 45%,#6aa0e0 75%,#4a78b8 100%);border:1.5px solid #1a2890"></div>
<div class="a" style="left:803.4px;top:721.5px;width:54px;height:26.7px;border-radius:13.35px;background:linear-gradient(#c8e4ff 0%,#90c4ff 45%,#6aa0e0 75%,#4a78b8 100%);border:1.5px solid #1a2890"></div>
<div class="a" style="left:910.5px;top:710px;width:54px;height:26px;border-radius:13px;background:linear-gradient(#70e0f0 0%,#20b8d0 45%,#0890a8 80%,#066878 100%);border:1px solid #0a4a60"></div>
<div class="a" style="left:921.9px;top:716.7px;font-size:12px;line-height:12px;font-weight:700;letter-spacing:-0.575px;color:#001018;">Setup</div>
<div class="a" style="left:789.5px;top:692.1px;font-size:12px;line-height:12px;font-weight:700;letter-spacing:0.036px;color:#101020;">Move Cursors</div>
<div class="a" style="left:804.0px;top:705.5px;font-size:12px;line-height:12px;font-weight:700;letter-spacing:-0.1px;color:#101020;">to Center</div>
<svg class="a" style="left:0;top:0" width="1025" height="770">
<g stroke-width="2" fill="none">
<line x1="457.5" y1="734.5" x2="490.5" y2="734.5" stroke="#a08060"/>
<line x1="457.5" y1="733" x2="490.5" y2="733" stroke="#20e020"/>
<line x1="457.5" y1="746" x2="490.5" y2="746" stroke="#a08060"/>
<line x1="457.5" y1="744.5" x2="490.5" y2="744.5" stroke="#20e020"/>
<path d="M466,744.5 C469,744.5 470,733 473,733 C476,733 477,746 481,747 C484,747.5 485,745 487,744.5" stroke="#1a2090" stroke-width="1.3"/>
<path d="M540,745.5 L551,745.5 C553,745.5 553,734.5 556.5,734.5 C560,734.5 560,745.5 562,745.5 L571,745.5" stroke="#1a2090" stroke-width="1.3"/>
<line x1="546.5" y1="732" x2="546.5" y2="750" stroke="#20e020" stroke-width="1.5"/>
<line x1="564.5" y1="732" x2="564.5" y2="750" stroke="#20e020" stroke-width="1.5"/>
<path d="M621,739 L627.5,739 L631.5,732.5 L638,732.5 L638,739 L647,739" stroke="#1a2090" stroke-width="1.3"/>
<path d="M621,741.5 L639.5,741.5 L642.5,747.5 L647,747.5" stroke="#1a2090" stroke-width="1.3"/>
<line x1="628" y1="738" x2="631" y2="733" stroke="#20e020" stroke-width="1"/>
<line x1="640" y1="742" x2="642" y2="747" stroke="#20e020" stroke-width="1"/>
<rect x="704.5" y="731.5" width="20.5" height="16.5" fill="#a8d0f8" stroke="#303848" stroke-width="1.5"/>
<line x1="710.5" y1="732" x2="710.5" y2="748" stroke="#20e020" stroke-width="1.3"/>
<line x1="718.5" y1="732" x2="718.5" y2="748" stroke="#20e020" stroke-width="1.3"/>
<line x1="705" y1="736.5" x2="725" y2="736.5" stroke="#20e020" stroke-width="1.3"/>
<line x1="705" y1="743.5" x2="725" y2="743.5" stroke="#20e020" stroke-width="1.3"/>
</g>
<circle cx="1006" cy="699" r="11.5" fill="#303858"/>
<circle cx="1005" cy="698" r="11.5" fill="#b4c4e4"/>
<circle cx="1005" cy="698" r="8" fill="#fff"/>
<text x="1005" y="703.5" font-family='"Liberation Sans", sans-serif' font-size="14" font-weight="700" text-anchor="middle" fill="#1a20a0">X</text>
<polygon points="999,726 1009,718 1009,734" fill="none" stroke="#6a7cbc" stroke-width="1.5"/>
<polygon points="999,737 1010,746 999,754" fill="none" stroke="#6a7cbc" stroke-width="1.5"/>
<g fill="#404a78"><rect x="16" y="684" width="3" height="3"/><rect x="22" y="684" width="3" height="3"/><rect x="16" y="690" width="3" height="3"/></g>
</svg>
<div class="a" style="left:1024px;top:0;width:1px;height:770px;background:#eceef6"></div>
</body></html>
